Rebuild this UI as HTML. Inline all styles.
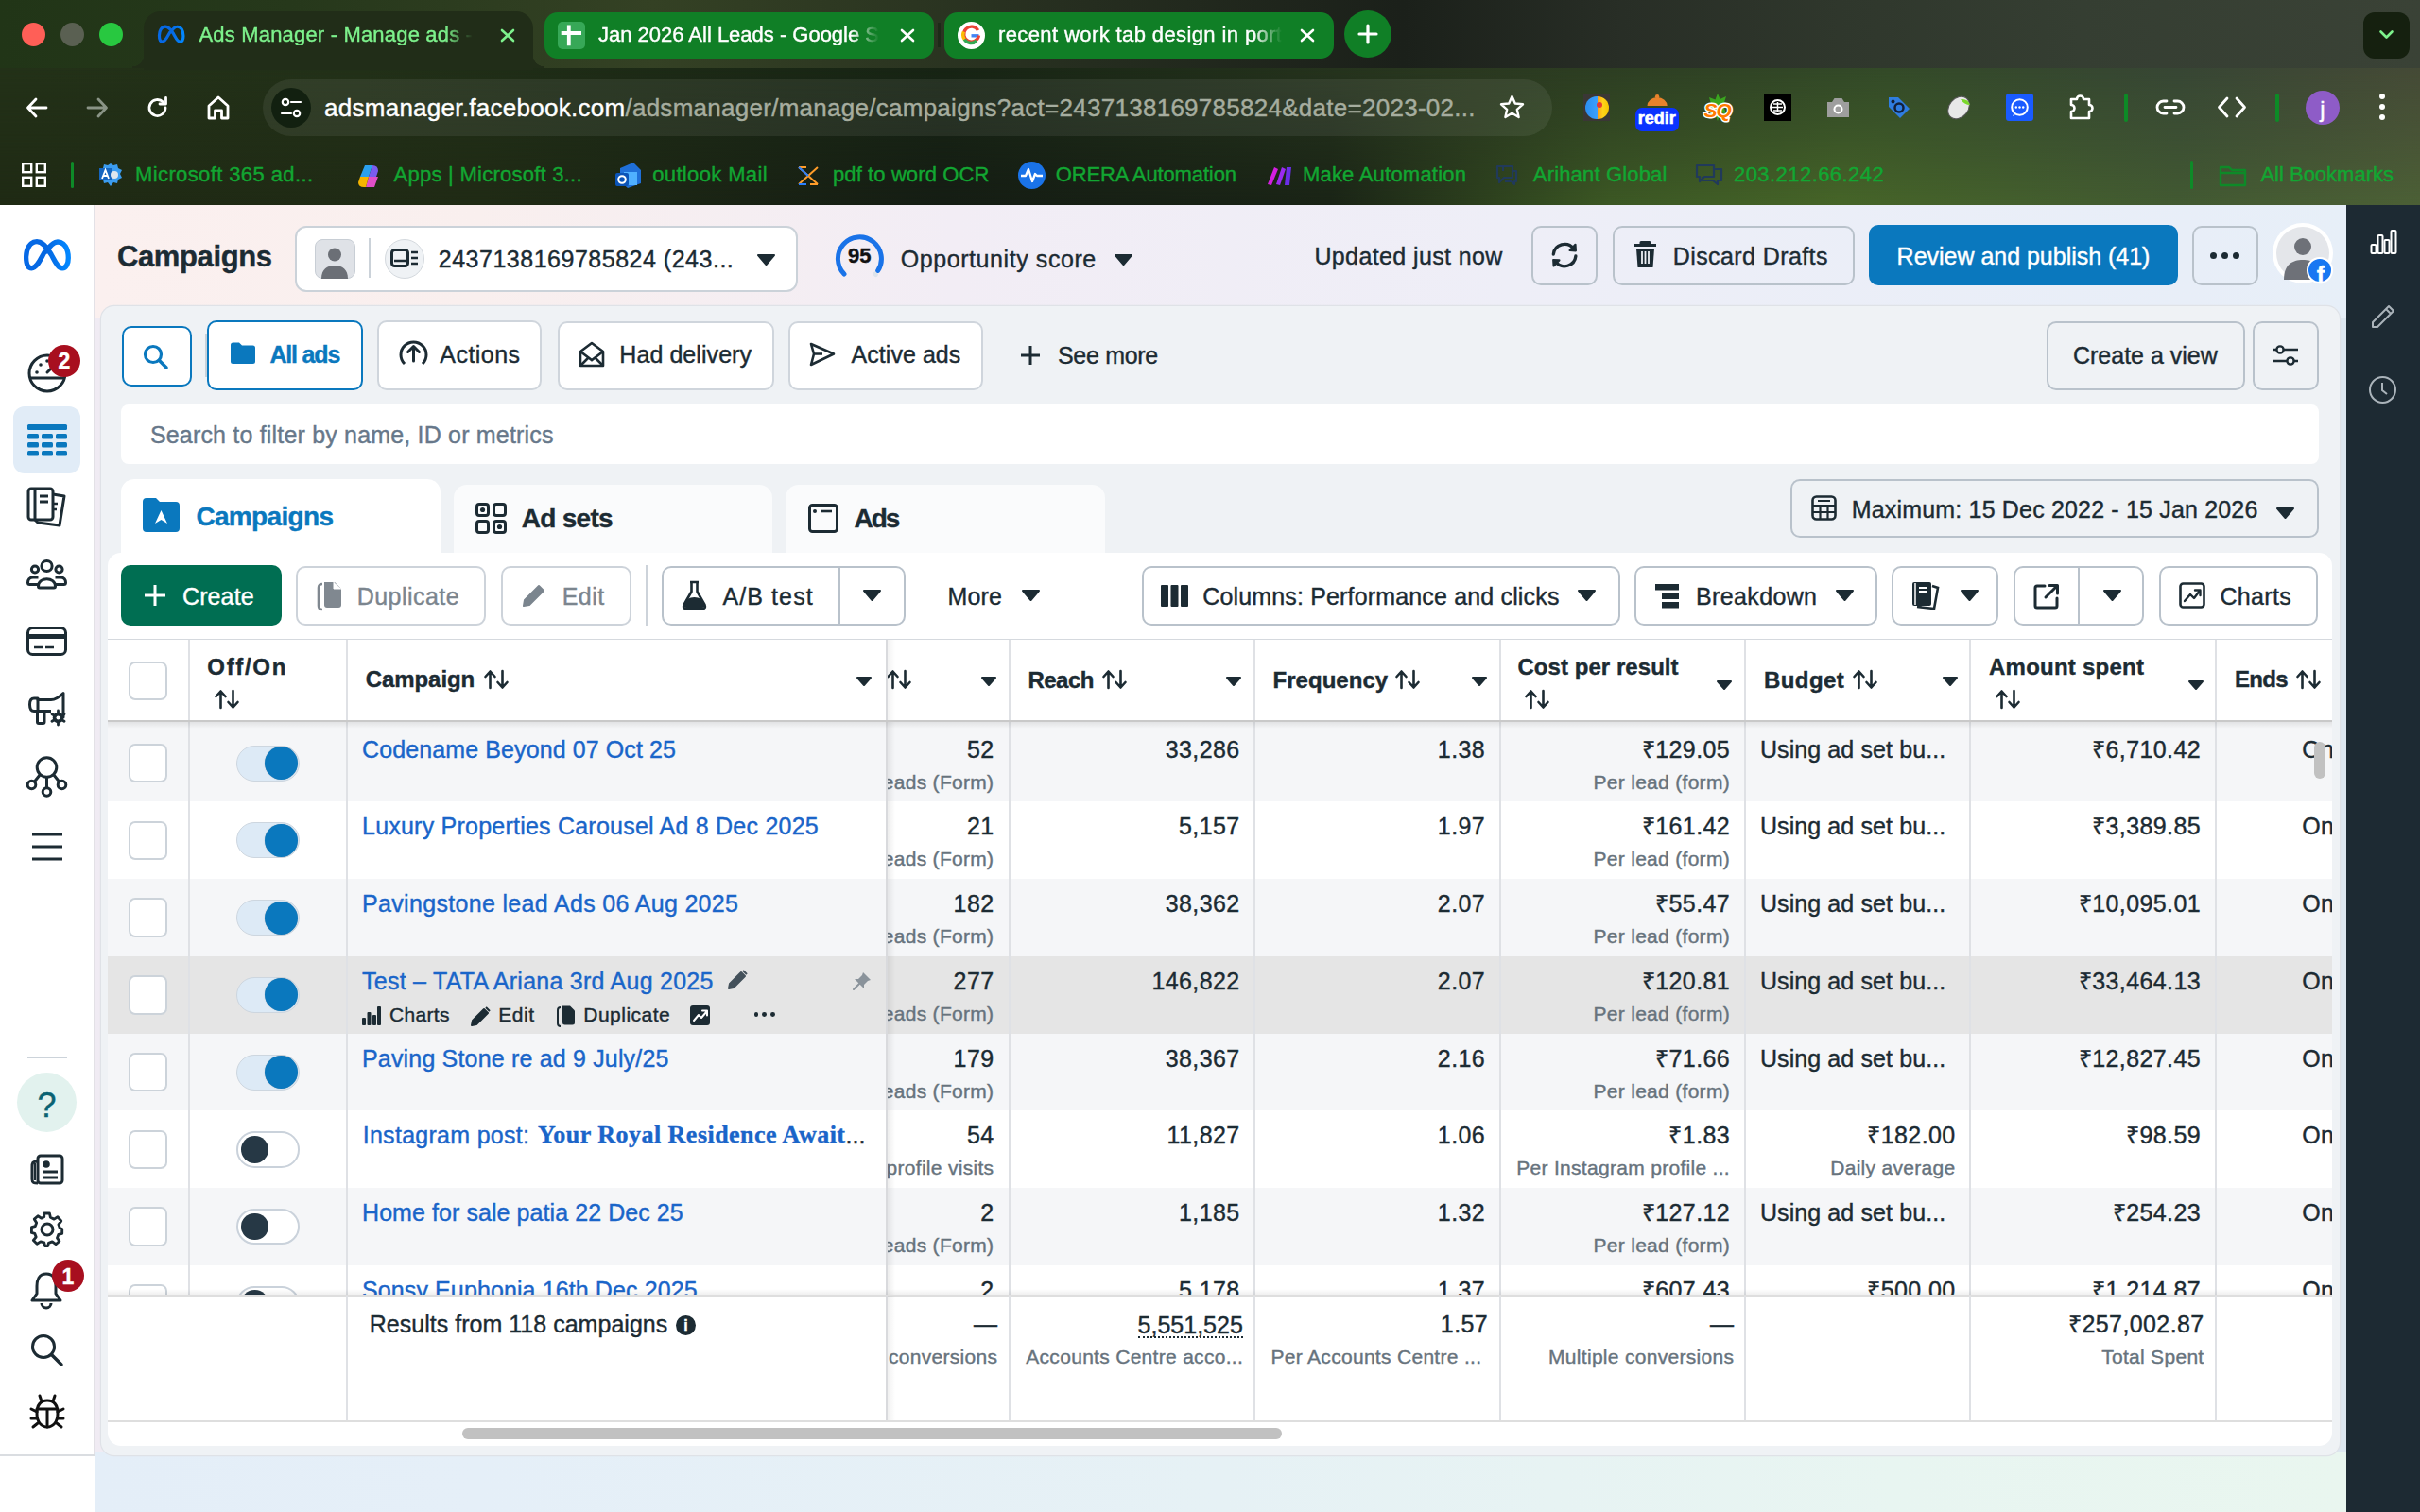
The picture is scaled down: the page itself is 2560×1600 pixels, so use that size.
<!DOCTYPE html>
<html><head><meta charset="utf-8"><title>Ads Manager</title>
<style>html,body{margin:0;padding:0;width:2560px;height:1600px;overflow:hidden;background:#fff;font-family:"Liberation Sans",sans-serif}div[id^=t],#url{-webkit-text-stroke-width:0.4px}</style>
</head><body>
<div style="position:absolute;left:0px;top:0px;width:2560px;height:72px;background:linear-gradient(90deg,#213517 0%,#26381b 12%,#344124 27%,#252d1f 45%,#1b201a 58%,#282e26 67%,#2f372c 76%,#353e32 86%,#3a4236 100%)"></div>
<div style="position:absolute;left:0px;top:72px;width:2560px;height:145px;background:linear-gradient(90deg,#1f2a14 0%,#202b15 20%,#151d14 39%,#1a2416 55%,#3c5824 66.5%,#466528 76%,#425a32 90%,#4c6036 100%)"></div>
<div style="position:absolute;left:0px;top:72px;width:2560px;height:145px;background:linear-gradient(90deg,#233118 0%,#223018 15%,#172414 39%,#2a3820 61%,#334a28 78%,#374634 90%,#454a36 100%);-webkit-mask-image:linear-gradient(180deg,#000 0%,rgba(0,0,0,0.55) 50%,transparent 100%)"></div>
<div style="position:absolute;left:23.0px;top:24px;width:25px;height:25px;border-radius:50%;background:#ff5f57"></div>
<div style="position:absolute;left:63.5px;top:24px;width:25px;height:25px;border-radius:50%;background:#5a6052"></div>
<div style="position:absolute;left:104.5px;top:24px;width:25px;height:25px;border-radius:50%;background:#28c840"></div>
<div style="position:absolute;left:152px;top:12px;width:412px;height:62px;background:#212d18;border-radius:18px 18px 0 0"></div>
<div style="position:absolute;left:140px;top:58px;width:12px;height:14px;background:radial-gradient(circle at 0 0, transparent 12px, #212d18 12.5px)"></div>
<div style="position:absolute;left:564px;top:58px;width:12px;height:14px;background:radial-gradient(circle at 12px 0, transparent 12px, #212d18 12.5px)"></div>
<svg style="position:absolute;left:163.067px;top:22.44px;overflow:visible" width="36.48" height="28.499999999999996" viewBox="0 0 64 50"><defs><linearGradient id="mg163" x1="0" y1="0" x2="1" y2="0"><stop offset="0" stop-color="#0669e6"/><stop offset="0.5" stop-color="#0668e1"/><stop offset="1" stop-color="#0287ff"/></linearGradient></defs><path d="M29 22 C25 29 21 38.8 15.5 38.8 C11 38.8 9.6 33 9.6 27 C9.6 18 14 10.7 21 10.7 C27 10.7 31 16 36 24 C40 31 43 38.8 48 38.8 C52 38.8 54.3 34 54.3 28 C54.3 18 50 11 43 11 C38 11 34.5 15.5 31 21" fill="none" stroke="url(#mg163)" stroke-width="5.6" stroke-linecap="round"/></svg>
<div id="t0" style="position:absolute;left:210.5px;top:25.50px;font-family:'Liberation Sans', sans-serif;font-size:22px;line-height:22px;font-weight:400;color:#7df28c;white-space:nowrap;letter-spacing:0.182px;-webkit-mask-image:linear-gradient(90deg,#000 90%,transparent 100%)">Ads Manager - Manage ads -</div>
<svg style="position:absolute;left:530px;top:31px;overflow:visible;" width="14" height="13" viewBox="0 0 14 13"><path d="M1 1 L13 12 M13 1 L1 12" stroke="#7df28c" stroke-width="2.6" stroke-linecap="round"/></svg>
<div style="position:absolute;left:576px;top:12.5px;width:412px;height:49.5px;background:#107f26;border-radius:14px"></div>
<div style="position:absolute;left:590.2px;top:22.9px;width:28.5px;height:28.8px;background:#37a857;border-radius:5px"></div>
<svg style="position:absolute;left:590.2px;top:22.9px;overflow:visible;" width="28.5" height="28.8" viewBox="0 0 28.5 28.8"><path d="M11.8 3.5 V25.3 M3.7 12 H25" stroke="#fff" stroke-width="3.8"/></svg>
<div id="t1" style="position:absolute;left:633px;top:25.50px;font-family:'Liberation Sans', sans-serif;font-size:22px;line-height:22px;font-weight:400;color:#ffffff;white-space:nowrap;letter-spacing:-0.008px;-webkit-mask-image:linear-gradient(90deg,#000 90%,transparent 100%)">Jan 2026 All Leads - Google S</div>
<svg style="position:absolute;left:953px;top:31px;overflow:visible;" width="14" height="13" viewBox="0 0 14 13"><path d="M1 1 L13 12 M13 1 L1 12" stroke="#fff" stroke-width="2.6" stroke-linecap="round"/></svg>
<div style="position:absolute;left:992px;top:24px;width:3px;height:26px;background:#1d2a18"></div>
<div style="position:absolute;left:999px;top:12.5px;width:412px;height:49.5px;background:#107f26;border-radius:14px"></div>
<div style="position:absolute;left:1013px;top:22.5px;width:29px;height:29px;background:#fff;border-radius:50%"></div>
<svg style="position:absolute;left:1015px;top:24.5px;overflow:visible;" width="25" height="25" viewBox="0 0 25 25"><path d="M20.5 12.8 H12.5" stroke="#4285f4" stroke-width="3.4"/><path d="M19.6 7.2 A8 8 0 1 0 20.5 12.5" fill="none" stroke="#ea4335" stroke-width="3.4"/><path d="M5.2 16.5 A8 8 0 0 0 18 18" fill="none" stroke="#34a853" stroke-width="3.4"/><path d="M4.5 8.5 A8 8 0 0 0 5.2 16.5" fill="none" stroke="#fbbc05" stroke-width="3.4"/></svg>
<div id="t2" style="position:absolute;left:1056px;top:25.50px;font-family:'Liberation Sans', sans-serif;font-size:22px;line-height:22px;font-weight:400;color:#ffffff;white-space:nowrap;letter-spacing:0.393px;-webkit-mask-image:linear-gradient(90deg,#000 90%,transparent 100%)">recent work tab design in port</div>
<svg style="position:absolute;left:1376px;top:31px;overflow:visible;" width="14" height="13" viewBox="0 0 14 13"><path d="M1 1 L13 12 M13 1 L1 12" stroke="#fff" stroke-width="2.6" stroke-linecap="round"/></svg>
<div style="position:absolute;left:1422px;top:11px;width:50px;height:50px;background:#107f26;border-radius:50%"></div>
<svg style="position:absolute;left:1436px;top:25px;overflow:visible;" width="22" height="22" viewBox="0 0 22 22"><path d="M11 2 V20 M2 11 H20" stroke="#fff" stroke-width="3.2" stroke-linecap="round"/></svg>
<div style="position:absolute;left:2500px;top:12.5px;width:49px;height:49px;background:#15200f;border-radius:12px"></div>
<svg style="position:absolute;left:2517px;top:32px;overflow:visible;" width="15" height="9" viewBox="0 0 15 9"><path d="M1.5 1.5 L7.5 7.5 L13.5 1.5" fill="none" stroke="#7df28c" stroke-width="2.6" stroke-linecap="round" stroke-linejoin="round"/></svg>
<svg style="position:absolute;left:27px;top:102px;overflow:visible;" width="24" height="24" viewBox="0 0 24 24"><path d="M22 12 H3 M11 3 L2.5 12 L11 21" fill="none" stroke="#fff" stroke-width="2.8" stroke-linecap="round" stroke-linejoin="round"/></svg>
<svg style="position:absolute;left:91px;top:102px;overflow:visible;" width="24" height="24" viewBox="0 0 24 24"><path d="M2 12 H21 M13 3 L21.5 12 L13 21" fill="none" stroke="#8a9486" stroke-width="2.8" stroke-linecap="round" stroke-linejoin="round"/></svg>
<svg style="position:absolute;left:155px;top:102px;overflow:visible;" width="24" height="24" viewBox="0 0 24 24"><path d="M20 12 A8.5 8.5 0 1 1 17.5 6" fill="none" stroke="#fff" stroke-width="2.8" stroke-linecap="round"/><path d="M20.5 1.5 V8 H14" fill="none" stroke="#fff" stroke-width="2.8" stroke-linecap="round" stroke-linejoin="round"/></svg>
<svg style="position:absolute;left:219px;top:101px;overflow:visible;" width="24" height="26" viewBox="0 0 24 26"><path d="M2 11 L12 2 L22 11 V24 H15.5 V16 H8.5 V24 H2 Z" fill="none" stroke="#fff" stroke-width="2.8" stroke-linejoin="round"/></svg>
<div style="position:absolute;left:278px;top:84px;width:1364px;height:60px;background:rgba(255,255,255,0.07);border-radius:30px"></div>
<div style="position:absolute;left:287px;top:93px;width:42px;height:42px;background:#122010;border-radius:50%"></div>
<svg style="position:absolute;left:296px;top:103px;overflow:visible;" width="24" height="22" viewBox="0 0 24 22"><circle cx="6" cy="5" r="3.2" fill="none" stroke="#fff" stroke-width="2.2"/><path d="M12 5 H22" stroke="#fff" stroke-width="2.2" stroke-linecap="round"/><circle cx="18" cy="17" r="3.2" fill="none" stroke="#fff" stroke-width="2.2"/><path d="M2 17 H12" stroke="#fff" stroke-width="2.2" stroke-linecap="round"/></svg>
<div id="url" style="position:absolute;left:343px;top:100.6px;font-family:'Liberation Sans';font-size:26px;line-height:26px;white-space:nowrap;color:#a6ad9f;letter-spacing:0.27px"><span style="color:#fff">adsmanager.facebook.com</span>/adsmanager/manage/campaigns?act=2437138169785824&amp;date=2023-02...</div>
<svg style="position:absolute;left:1586px;top:100px;overflow:visible;" width="27" height="27" viewBox="0 0 27 27"><path d="M13.5 2 L16.8 9.5 L25 10.3 L18.8 15.8 L20.6 24 L13.5 19.8 L6.4 24 L8.2 15.8 L2 10.3 L10.2 9.5 Z" fill="none" stroke="#fff" stroke-width="2.4" stroke-linejoin="round"/></svg>
<div style="position:absolute;left:1675px;top:99.7px;width:28px;height:28px;background:#3a3735"></div>
<div style="position:absolute;left:1677px;top:101.5px;width:24.5px;height:24.5px;border-radius:50%;background:linear-gradient(90deg,#2b8ef0 0%,#3aa0ff 50%,#ff9a1a 50%,#ffd21a 75%,#f5c400 100%)"></div>
<div style="position:absolute;left:1689px;top:108px;width:6px;height:6px;background:#e53935;border-radius:50%"></div>
<svg style="position:absolute;left:1741.8px;top:100px;overflow:visible;" width="22.2" height="12" viewBox="0 0 22.2 12"><circle cx="11.1" cy="2.3" r="2.2" fill="#e8822c"/><path d="M0.5 12 A10.6 9 0 0 1 21.7 12 Z" fill="#e8822c"/></svg>
<div style="position:absolute;left:1729.7px;top:113.5px;width:46.3px;height:25.2px;background:#0a33ff;border-radius:7px"></div>
<div id="t3" style="position:absolute;left:1752.8px;top:116.30px;font-family:'Liberation Sans', sans-serif;font-size:18px;line-height:18px;font-weight:700;color:#fff;white-space:nowrap;transform:translateX(-50%);-webkit-text-stroke-width:0.6px">redir</div>
<svg style="position:absolute;left:1805px;top:99px;overflow:visible;" width="24" height="29" viewBox="0 0 24 29"><path d="M12 0 L14.5 6 L21 3 L19 9.5 L24 12 L19 15 L21 22 L15 19.5 L12 29 L9 21 L3 24 L5 17 L0 14 L5 11 L3 4 L9.5 6.5 Z" fill="#3aa51f"/></svg>
<div id="t4" style="position:absolute;left:1802.5px;top:106.35px;font-family:'Liberation Sans', sans-serif;font-size:21px;line-height:21px;font-weight:700;color:#ff7a00;white-space:nowrap;font-style:italic;-webkit-text-stroke:3px #fff;paint-order:stroke fill;letter-spacing:-1px">SQ</div>
<div style="position:absolute;left:1866px;top:99px;width:29px;height:29px;background:#000"></div>
<svg style="position:absolute;left:1871px;top:104px;overflow:visible;" width="19" height="19" viewBox="0 0 19 19"><circle cx="9.5" cy="9.5" r="7.5" fill="none" stroke="#fff" stroke-width="2"/><path d="M4 9.5 H15 M9.5 4 V15 M5 6 H14 M5 13 H14" stroke="#fff" stroke-width="1.5"/></svg>
<svg style="position:absolute;left:1930px;top:101px;overflow:visible;" width="29" height="25" viewBox="0 0 29 25"><path d="M3 7 H8 L10.5 3 H18.5 L21 7 H26 V23 H3 Z" fill="#9e9e9e"/><circle cx="14.5" cy="14.5" r="5" fill="#fff"/><circle cx="14.5" cy="14.5" r="3" fill="#9e9e9e"/></svg>
<svg style="position:absolute;left:1995px;top:100px;overflow:visible;" width="28" height="28" viewBox="0 0 28 28"><path d="M3 3 H13 L25 15 L15 25 L3 13 Z" fill="#2f7de1"/><circle cx="14" cy="14" r="4.5" fill="none" stroke="#13203a" stroke-width="2.5"/><circle cx="7.5" cy="7.5" r="2" fill="#13203a"/></svg>
<svg style="position:absolute;left:2058px;top:99px;overflow:visible;" width="30" height="30" viewBox="0 0 30 30"><ellipse cx="14" cy="15" rx="10" ry="13" transform="rotate(40 14 15)" fill="#e8e8e8" stroke="#555" stroke-width="1"/><path d="M16 6 Q24 5 26 12 Q20 12 16 6 Z" fill="#7bd82b"/></svg>
<div style="position:absolute;left:2122px;top:99px;width:29px;height:29px;background:#1a5bff;border-radius:3px"></div>
<svg style="position:absolute;left:2126px;top:103px;overflow:visible;" width="21" height="21" viewBox="0 0 21 21"><circle cx="10.5" cy="10.5" r="8.3" fill="none" stroke="#fff" stroke-width="2"/><path d="M4 18 L3 20 L6 18.5" fill="#fff"/><circle cx="6.8" cy="10.5" r="1.2" fill="#fff"/><circle cx="10.5" cy="10.5" r="1.2" fill="#fff"/><circle cx="14.2" cy="10.5" r="1.2" fill="#fff"/></svg>
<svg style="position:absolute;left:2187px;top:99px;overflow:visible;" width="30" height="30" viewBox="0 0 30 30"><path d="M4 6 H10 A3.5 3.5 0 0 1 17 6 H23 V12 A3.5 3.5 0 0 1 23 19 V26 H4 V19 A3.5 3.5 0 0 0 4 12 Z" fill="none" stroke="#fff" stroke-width="2.6" stroke-linejoin="round"/></svg>
<div style="position:absolute;left:2247px;top:99px;width:4px;height:30px;background:#0d8a26;border-radius:2px"></div>
<svg style="position:absolute;left:2280px;top:104px;overflow:visible;" width="32" height="19" viewBox="0 0 32 19"><path d="M12 3 H8.5 A6.5 6.5 0 0 0 8.5 16 H12 M20 3 H23.5 A6.5 6.5 0 0 1 23.5 16 H20 M10 9.5 H22" fill="none" stroke="#fff" stroke-width="2.8" stroke-linecap="round"/></svg>
<svg style="position:absolute;left:2345px;top:101px;overflow:visible;" width="32" height="25" viewBox="0 0 32 25"><path d="M11 3 L2.5 12.5 L11 22 M21 3 L29.5 12.5 L21 22" fill="none" stroke="#fff" stroke-width="2.8" stroke-linecap="round" stroke-linejoin="round"/></svg>
<div style="position:absolute;left:2407px;top:99px;width:4px;height:30px;background:#0d8a26;border-radius:2px"></div>
<div style="position:absolute;left:2439px;top:96px;width:36px;height:36px;background:#8e5cc7;border-radius:50%"></div>
<div id="t5" style="position:absolute;left:2457px;top:103.60px;font-family:'Liberation Sans', sans-serif;font-size:24px;line-height:24px;font-weight:400;color:#fff;white-space:nowrap;transform:translateX(-50%)">j</div>
<div style="position:absolute;left:2517px;top:99px;width:6px;height:6px;background:#fff;border-radius:50%"></div>
<div style="position:absolute;left:2517px;top:110px;width:6px;height:6px;background:#fff;border-radius:50%"></div>
<div style="position:absolute;left:2517px;top:121px;width:6px;height:6px;background:#fff;border-radius:50%"></div>
<svg style="position:absolute;left:23px;top:172px;overflow:visible;" width="26" height="26" viewBox="0 0 26 26"><rect x="1.2" y="1.2" width="9" height="9" fill="none" stroke="#fff" stroke-width="2.4"/><rect x="1.2" y="15.8" width="9" height="9" fill="none" stroke="#fff" stroke-width="2.4"/><rect x="15.8" y="1.2" width="9" height="9" fill="none" stroke="#fff" stroke-width="2.4"/><rect x="15.8" y="15.8" width="9" height="9" fill="none" stroke="#fff" stroke-width="2.4"/></svg>
<div style="position:absolute;left:74.5px;top:171px;width:3.5px;height:28px;background:#0e8a28;border-radius:2px"></div>
<svg style="position:absolute;left:103px;top:171px;overflow:visible;" width="29" height="28" viewBox="0 0 29 28"><path d="M14 2 L17 4 L21 3 L22 7 L26 9 L24 13 L26 17 L22 19 L21 23 L17 22 L14 26 L11 22 L7 23 L6 19 L2 17 L4 13 L2 9 L6 7 L7 3 L11 4 Z" fill="#3b9cf0"/><rect x="2" y="7" width="13" height="13" fill="#1565c0"/><path d="M5 18 L8.5 9 L12 18 M6.2 15 H10.8" stroke="#fff" stroke-width="1.8" fill="none"/><circle cx="18" cy="14" r="4" fill="#dfe6ee"/></svg>
<div id="t6" style="position:absolute;left:143px;top:173.50px;font-family:'Liberation Sans', sans-serif;font-size:22px;line-height:22px;font-weight:400;color:#12a632;white-space:nowrap;letter-spacing:0.390px;">Microsoft 365 ad...</div>
<svg style="position:absolute;left:378px;top:173px;overflow:visible;" width="27" height="26" viewBox="0 0 27 26"><path d="M8 2 H16 L12 14 H3 Z" fill="#2aa0f0"/><path d="M12 14 H22 L18 25 H9 Z" fill="#e04ec8"/><path d="M16 2 Q22 2 22 8 L20 14 H12 Z" fill="#7b5cf0"/><path d="M3 14 L1 20 Q1 25 7 25 H9 L12 14 Z" fill="#f5b400"/></svg>
<div id="t7" style="position:absolute;left:416.6px;top:173.50px;font-family:'Liberation Sans', sans-serif;font-size:22px;line-height:22px;font-weight:400;color:#12a632;white-space:nowrap;letter-spacing:0.249px;">Apps | Microsoft 3...</div>
<svg style="position:absolute;left:650px;top:170px;overflow:visible;" width="29" height="30" viewBox="0 0 29 30"><path d="M6 8 L20 2 L28 10 V24 L14 29 L6 22 Z" fill="#1f6fd8"/><path d="M10 12 H24 V26 H10 Z" fill="#4fb0ff"/><rect x="1" y="13" width="14" height="14" rx="2" fill="#0b54b8"/><circle cx="8" cy="20" r="3.8" fill="none" stroke="#fff" stroke-width="2"/></svg>
<div id="t8" style="position:absolute;left:690.2px;top:173.50px;font-family:'Liberation Sans', sans-serif;font-size:22px;line-height:22px;font-weight:400;color:#12a632;white-space:nowrap;letter-spacing:0.364px;">outlook Mail</div>
<svg style="position:absolute;left:843px;top:174px;overflow:visible;" width="24" height="24" viewBox="0 0 24 24"><path d="M2 3 L12 12 L2 21 M22 3 L12 12 L22 21 M2 3 H10 M14 21 H22" fill="none" stroke="#ff9d2a" stroke-width="2"/><path d="M2 3 L12 12 M2 21 H10" fill="none" stroke="#2b7fff" stroke-width="2"/></svg>
<div id="t9" style="position:absolute;left:881px;top:173.50px;font-family:'Liberation Sans', sans-serif;font-size:22px;line-height:22px;font-weight:400;color:#12a632;white-space:nowrap;letter-spacing:0.104px;">pdf to word OCR</div>
<div style="position:absolute;left:1077px;top:171px;width:29px;height:29px;background:#1a73e8;border-radius:50%"></div>
<svg style="position:absolute;left:1079px;top:176px;overflow:visible;" width="25" height="19" viewBox="0 0 25 19"><path d="M1 10 H6 L9 3 L13 16 L16 8 L18 10 H24" fill="none" stroke="#fff" stroke-width="2.3" stroke-linejoin="round"/></svg>
<div id="t10" style="position:absolute;left:1116.7px;top:173.50px;font-family:'Liberation Sans', sans-serif;font-size:22px;line-height:22px;font-weight:400;color:#12a632;white-space:nowrap;letter-spacing:-0.128px;">ORERA Automation</div>
<svg style="position:absolute;left:1340px;top:175px;overflow:visible;" width="27" height="22" viewBox="0 0 27 22"><path d="M1 20 L8 2 L12 4 L5 21 Z" fill="#d41ee0"/><path d="M10 20 L16 2 L20 4 L14 21 Z" fill="#9b2af0"/><path d="M19 21 L21 2 L26 2 L24 21 Z" fill="#6a2ee8"/></svg>
<div id="t11" style="position:absolute;left:1377.9px;top:173.50px;font-family:'Liberation Sans', sans-serif;font-size:22px;line-height:22px;font-weight:400;color:#12a632;white-space:nowrap;letter-spacing:0.223px;">Make Automation</div>
<svg style="position:absolute;left:1581px;top:173px;overflow:visible;" width="26" height="24" viewBox="0 0 26 24"><path d="M3 3 H19 V15 H10 L5 20 V15 H3 Z M9 8 V3 M19 8 H23 V19 H21 V22 L18 19 H11" fill="none" stroke="#213a5a" stroke-width="2.2" stroke-linejoin="round"/></svg>
<div id="t12" style="position:absolute;left:1621.8px;top:173.50px;font-family:'Liberation Sans', sans-serif;font-size:22px;line-height:22px;font-weight:400;color:#12a632;white-space:nowrap;letter-spacing:0.168px;">Arihant Global</div>
<svg style="position:absolute;left:1793px;top:173px;overflow:visible;" width="30" height="24" viewBox="0 0 30 24"><path d="M2 2 H20 V14 H10 L5 19 V14 H2 Z M8 14 V18 H19 L24 22 V18 H28 V6 H20" fill="none" stroke="#213a5a" stroke-width="2.2" stroke-linejoin="round"/></svg>
<div id="t13" style="position:absolute;left:1834px;top:173.50px;font-family:'Liberation Sans', sans-serif;font-size:22px;line-height:22px;font-weight:400;color:#12a632;white-space:nowrap;letter-spacing:0.443px;">203.212.66.242</div>
<div style="position:absolute;left:2316.5px;top:170px;width:3.5px;height:30px;background:#0e8a28;border-radius:2px"></div>
<svg style="position:absolute;left:2347px;top:174px;overflow:visible;" width="30" height="24" viewBox="0 0 30 24"><path d="M2 3 H11 L14 6 H28 V22 H2 Z M2 9 H28" fill="none" stroke="#0e8a28" stroke-width="2.4" stroke-linejoin="round"/></svg>
<div id="t14" style="position:absolute;left:2391.4px;top:173.50px;font-family:'Liberation Sans', sans-serif;font-size:22px;line-height:22px;font-weight:400;color:#12a632;white-space:nowrap;letter-spacing:0.001px;">All Bookmarks</div>
<div style="position:absolute;left:100px;top:217px;width:2382px;height:1383px;background:linear-gradient(90deg,#f0ebf3 0%,#eceef6 50%,#dde7f0 100%)"></div>
<div style="position:absolute;left:100px;top:217px;width:2382px;height:120px;background:linear-gradient(90deg,#fbf0ef 0%,#f9efee 17%,#f2edf5 38%,#eeeef7 63%,#e8eef8 93%,#e7eff8 100%)"></div>
<div style="position:absolute;left:100px;top:1536px;width:2382px;height:64px;background:linear-gradient(90deg,#e4eef8 0%,#e5eff8 17%,#e6f1f5 50%,#e8f5f1 80%,#e9f6ef 100%)"></div>
<div style="position:absolute;left:0px;top:217px;width:100px;height:1323px;background:#fff;border-right:1.5px solid #e3e1e6;box-sizing:border-box"></div>
<div style="position:absolute;left:0px;top:1539px;width:100px;height:1.5px;background:#dadde1"></div>
<div style="position:absolute;left:0px;top:1540.5px;width:100px;height:60px;background:#fff"></div>
<svg style="position:absolute;left:18px;top:245px;overflow:visible" width="64.0" height="50.0" viewBox="0 0 64 50"><defs><linearGradient id="mg18" x1="0" y1="0" x2="1" y2="0"><stop offset="0" stop-color="#0669e6"/><stop offset="0.5" stop-color="#0668e1"/><stop offset="1" stop-color="#0287ff"/></linearGradient></defs><path d="M29 22 C25 29 21 38.8 15.5 38.8 C11 38.8 9.6 33 9.6 27 C9.6 18 14 10.7 21 10.7 C27 10.7 31 16 36 24 C40 31 43 38.8 48 38.8 C52 38.8 54.3 34 54.3 28 C54.3 18 50 11 43 11 C38 11 34.5 15.5 31 21" fill="none" stroke="url(#mg18)" stroke-width="5.3" stroke-linecap="round"/></svg>
<svg style="position:absolute;left:29px;top:374px;overflow:visible;" width="42" height="42" viewBox="0 0 42 42"><circle cx="21" cy="21" r="19" fill="none" stroke="#1c2b33" stroke-width="3"/><path d="M3 26 H39" stroke="#1c2b33" stroke-width="3"/><circle cx="10" cy="20" r="1.8" fill="#1c2b33"/><circle cx="14" cy="12" r="1.8" fill="#1c2b33"/><circle cx="21" cy="8" r="1.8" fill="#1c2b33"/><path d="M21 20 L29 12" stroke="#1c2b33" stroke-width="3" stroke-linecap="round"/></svg>
<div style="position:absolute;left:51px;top:365px;width:34px;height:34px;background:#a80f1f;border-radius:50%"></div>
<div id="t15" style="position:absolute;left:68px;top:371.45px;font-family:'Liberation Sans', sans-serif;font-size:23px;line-height:23px;font-weight:700;color:#fff;white-space:nowrap;transform:translateX(-50%)">2</div>
<div style="position:absolute;left:14px;top:430px;width:71px;height:71px;background:#e1ecf7;border-radius:12px"></div>
<svg style="position:absolute;left:29px;top:449px;overflow:visible;" width="42" height="34" viewBox="0 0 42 34"><rect x="0" y="0" width="42" height="6" rx="1.5" fill="#0a78be"/><rect x="0" y="10" width="12" height="5.5" rx="1.5" fill="#0a78be"/><rect x="15" y="10" width="12" height="5.5" rx="1.5" fill="#0a78be"/><rect x="30" y="10" width="12" height="5.5" rx="1.5" fill="#0a78be"/><rect x="0" y="19" width="12" height="5.5" rx="1.5" fill="#0a78be"/><rect x="15" y="19" width="12" height="5.5" rx="1.5" fill="#0a78be"/><rect x="30" y="19" width="12" height="5.5" rx="1.5" fill="#0a78be"/><rect x="0" y="28" width="12" height="5.5" rx="1.5" fill="#0a78be"/><rect x="15" y="28" width="12" height="5.5" rx="1.5" fill="#0a78be"/><rect x="30" y="28" width="12" height="5.5" rx="1.5" fill="#0a78be"/></svg>
<svg style="position:absolute;left:28px;top:515px;overflow:visible;" width="43" height="43" viewBox="0 0 43 43"><rect x="2" y="2" width="26" height="33" rx="3" fill="none" stroke="#1c2b33" stroke-width="3"/><path d="M9 2 V35 M14 10 H23 M14 16 H23" stroke="#1c2b33" stroke-width="3"/><path d="M28 8 L40 10 L35 41 L12 38 L9 35" fill="none" stroke="#1c2b33" stroke-width="3" stroke-linejoin="round"/><path d="M29 18 H33 M29 24 H32" stroke="#1c2b33" stroke-width="2.5"/></svg>
<svg style="position:absolute;left:26px;top:590px;overflow:visible;" width="48" height="36" viewBox="0 0 48 36"><circle cx="23.5" cy="9" r="5.6" fill="none" stroke="#1c2b33" stroke-width="3"/><circle cx="11" cy="12.5" r="3.6" fill="none" stroke="#1c2b33" stroke-width="3"/><circle cx="36.5" cy="12.5" r="3.6" fill="none" stroke="#1c2b33" stroke-width="3"/><path d="M14.5 30.5 C14.5 20 32.5 20 32.5 30.5 Q32.5 32 31 32 H16 Q14.5 32 14.5 30.5 Z" fill="none" stroke="#1c2b33" stroke-width="3" stroke-linejoin="round"/><path d="M14.5 21 H9 C5 21 3.5 24 3.5 26.5 Q3.5 28.5 5.5 28.5 H14 M32.5 21 H38 C42 21 43.5 24 43.5 26.5 Q43.5 28.5 41.5 28.5 H33" fill="none" stroke="#1c2b33" stroke-width="3" stroke-linejoin="round"/></svg>
<svg style="position:absolute;left:28px;top:663px;overflow:visible;" width="43" height="31" viewBox="0 0 43 31"><rect x="1.5" y="1.5" width="40" height="28" rx="5" fill="none" stroke="#1c2b33" stroke-width="3"/><rect x="1.5" y="8" width="40" height="5" fill="#1c2b33"/><path d="M8 22 H17 M20 22 H29" stroke="#1c2b33" stroke-width="2.5"/></svg>
<svg style="position:absolute;left:26px;top:728px;overflow:visible;" width="48" height="42" viewBox="0 0 48 42"><path d="M14 12.5 H28 Q34 12.5 41 5.5 V31" fill="none" stroke="#1c2b33" stroke-width="3" stroke-linecap="round" stroke-linejoin="round"/><path d="M14 11 H10 Q5.5 11 5.5 17.5 Q5.5 24.5 10 24.5 H14 Z M14 11 V24.5 H28" fill="none" stroke="#1c2b33" stroke-width="3" stroke-linejoin="round"/><path d="M13.5 24.5 V36 Q13.5 37.5 15 37.5 H19.5 Q21 37.5 21 36 V24.5" fill="none" stroke="#1c2b33" stroke-width="3" stroke-linejoin="round"/><g transform="translate(35.5 31.5)"><circle r="4.2" fill="none" stroke="#1c2b33" stroke-width="3.2"/><path d="M0 -7.5 V7.5 M-6.5 -3.75 L6.5 3.75 M-6.5 3.75 L6.5 -3.75" stroke="#1c2b33" stroke-width="2.8" stroke-linecap="round"/><circle r="2" fill="#fff"/></g></svg>
<svg style="position:absolute;left:26px;top:797px;overflow:visible;" width="48" height="48" viewBox="0 0 48 48"><circle cx="23.5" cy="15" r="10.3" fill="none" stroke="#1c2b33" stroke-width="3"/><circle cx="7.5" cy="33.5" r="4.3" fill="none" stroke="#1c2b33" stroke-width="3"/><circle cx="23.5" cy="41" r="4.3" fill="none" stroke="#1c2b33" stroke-width="3"/><circle cx="39.5" cy="33.5" r="4.3" fill="none" stroke="#1c2b33" stroke-width="3"/><path d="M23.5 25.3 V36.7 M16.5 22.5 L10.5 30 M30.5 22.5 L36.5 30" stroke="#1c2b33" stroke-width="3"/></svg>
<svg style="position:absolute;left:33px;top:881px;overflow:visible;" width="34" height="30" viewBox="0 0 34 30"><path d="M1 2 H33 M1 15 H33 M1 28 H33" stroke="#1c2b33" stroke-width="3"/></svg>
<div style="position:absolute;left:29px;top:1117.5px;width:42px;height:2px;background:#ccd3da"></div>
<div style="position:absolute;left:18px;top:1134.5px;width:63px;height:63px;background:#e2f2ee;border-radius:50%"></div>
<div id="t16" style="position:absolute;left:49.5px;top:1152.40px;font-family:'Liberation Sans', sans-serif;font-size:36px;line-height:36px;font-weight:400;color:#0b6373;white-space:nowrap;transform:translateX(-50%)">?</div>
<svg style="position:absolute;left:32px;top:1221px;overflow:visible;" width="36" height="33" viewBox="0 0 36 33"><rect x="8" y="2" width="26" height="29" rx="3" fill="none" stroke="#1c2b33" stroke-width="3"/><path d="M8 8 C2 8 2 10 2 14 V27 C2 31 4 31 8 31" fill="none" stroke="#1c2b33" stroke-width="3"/><path d="M5 10 V28" stroke="#1c2b33" stroke-width="2"/><circle cx="17" cy="11" r="3.8" fill="#1c2b33"/><path d="M13 19 H29 M13 25 H29" stroke="#1c2b33" stroke-width="3"/></svg>
<svg style="position:absolute;left:32px;top:1283px;overflow:visible;" width="36" height="36" viewBox="0 0 36 36"><path d="M15 1.5 H21 L22 6 L26 8 L30 5.5 L34 10 L31 14 L32.5 18 L35 19 V24 L31 25 L29.5 29 L32 32.5 L28 36 L24 33 L20 34.5 L19 38 H16 L15 34 L11 33 L7 35.5 L3 31.5 L6 28 L4.5 24 L1 23 V17 L5 16 L6.5 12 L4 8 L8 4.5 L12 7 L15 5.5 Z" transform="scale(0.95) translate(0.5 -0.5)" fill="none" stroke="#1c2b33" stroke-width="3" stroke-linejoin="round"/><circle cx="18" cy="18" r="6" fill="none" stroke="#1c2b33" stroke-width="3"/></svg>
<svg style="position:absolute;left:32px;top:1345px;overflow:visible;" width="34" height="38" viewBox="0 0 34 38"><path d="M17 3 C9 3 7 10 7 16 V24 L2 31 H32 L27 24 V16 C27 10 25 3 17 3 Z" fill="none" stroke="#1c2b33" stroke-width="3" stroke-linejoin="round"/><path d="M12 34 A5 5 0 0 0 22 34" fill="none" stroke="#1c2b33" stroke-width="3"/></svg>
<div style="position:absolute;left:55px;top:1333px;width:34px;height:34px;background:#a80f1f;border-radius:50%"></div>
<div id="t17" style="position:absolute;left:72px;top:1340.45px;font-family:'Liberation Sans', sans-serif;font-size:23px;line-height:23px;font-weight:700;color:#fff;white-space:nowrap;transform:translateX(-50%)">1</div>
<svg style="position:absolute;left:32px;top:1411px;overflow:visible;" width="36" height="36" viewBox="0 0 36 36"><circle cx="14" cy="14" r="11.5" fill="none" stroke="#1c2b33" stroke-width="3"/><path d="M22.5 22.5 L33 33" stroke="#1c2b33" stroke-width="3.5" stroke-linecap="round"/></svg>
<svg style="position:absolute;left:31px;top:1474px;overflow:visible;" width="38" height="38" viewBox="0 0 38 38"><path d="M19 8 C10 8 8 15 8 22 C8 31 13 36 19 36 C25 36 30 31 30 22 C30 15 28 8 19 8 Z" fill="none" stroke="#111" stroke-width="3"/><path d="M8 17 H30 M19 17 V36 M13 9 L11 3 M25 9 L27 3 M8 20 L2 17 M30 20 L36 17 M8 27 L2 27 M30 27 L36 27 M9 32 L4 36 M29 32 L34 36" stroke="#111" stroke-width="3" stroke-linecap="round"/></svg>
<div style="position:absolute;left:2482px;top:217px;width:78px;height:1383px;background:#1d2a33"></div>
<svg style="position:absolute;left:2507px;top:243px;overflow:visible;" width="28" height="26" viewBox="0 0 28 26"><rect x="1.5" y="16" width="5" height="9" rx="1" fill="none" stroke="#fff" stroke-width="2"/><rect x="8.5" y="6" width="5" height="19" rx="1" fill="none" stroke="#fff" stroke-width="2"/><rect x="15.5" y="11" width="5" height="14" rx="1" fill="none" stroke="#fff" stroke-width="2"/><rect x="22.5" y="1" width="5" height="24" rx="1" fill="none" stroke="#fff" stroke-width="2"/></svg>
<svg style="position:absolute;left:2508px;top:321px;overflow:visible;" width="27" height="27" viewBox="0 0 27 27"><path d="M2 20 L19 3 L24 8 L7 25 H2 Z M16 6 L21 11" fill="none" stroke="#aab3ba" stroke-width="2" stroke-linejoin="round"/></svg>
<svg style="position:absolute;left:2506px;top:398px;overflow:visible;" width="29" height="29" viewBox="0 0 29 29"><circle cx="14.5" cy="14.5" r="13.5" fill="none" stroke="#aab3ba" stroke-width="2"/><path d="M14 7 V15 L19 19" fill="none" stroke="#aab3ba" stroke-width="2"/></svg>
<div id="t18" style="position:absolute;left:124px;top:255.85px;font-family:'Liberation Sans', sans-serif;font-size:31px;line-height:31px;font-weight:700;color:#1c2b33;white-space:nowrap;letter-spacing:-0.389px;">Campaigns</div>
<div style="position:absolute;left:312px;top:238.5px;width:532px;height:70px;background:#fff;border:2px solid #cbd2d9;border-radius:12px;box-sizing:border-box"></div>
<div style="position:absolute;left:333px;top:252.5px;width:42.5px;height:42px;background:#dfe2e7;border:1.5px solid #c8ced5;border-radius:8px;box-sizing:border-box;overflow:hidden"></div>
<svg style="position:absolute;left:336px;top:260px;overflow:visible;" width="36" height="35" viewBox="0 0 36 35"><circle cx="18" cy="9.5" r="7" fill="#6b6f76"/><path d="M4 35 C4 25 10 21 18 21 C26 21 32 25 32 35 Z" fill="#6b6f76"/></svg>
<div style="position:absolute;left:390px;top:252px;width:2px;height:42px;background:#cbd2d9"></div>
<div style="position:absolute;left:406.5px;top:252.5px;width:42px;height:42px;background:#eff2f5;border:1.5px solid #d4d9de;border-radius:50%;box-sizing:border-box"></div>
<svg style="position:absolute;left:413px;top:263px;overflow:visible;" width="30" height="20" viewBox="0 0 30 20"><rect x="1.5" y="1.5" width="17" height="17" rx="3" fill="none" stroke="#1c2b33" stroke-width="3"/><path d="M4 13 H16" stroke="#1c2b33" stroke-width="2.5"/><path d="M22 4 H29 M22 10 H29 M22 16 H29" stroke="#1c2b33" stroke-width="2.6"/></svg>
<div id="t19" style="position:absolute;left:463.8px;top:261.75px;font-family:'Liberation Sans', sans-serif;font-size:25px;line-height:25px;font-weight:400;color:#1c2b33;white-space:nowrap;letter-spacing:0.510px;">2437138169785824 (243...</div>
<svg style="position:absolute;left:801.5px;top:270.0px;overflow:visible;" width="17" height="10" viewBox="0 0 17 10"><path d="M0 0 L17 0 L8.5 10 Z" fill="#1c2b33" stroke="#1c2b33" stroke-width="2" stroke-linejoin="round"/></svg>
<svg style="position:absolute;left:880px;top:245px;overflow:visible;" width="58" height="58" viewBox="0 0 58 58"><path d="M46 45 L46.5 45.5" stroke="#dde3eb" stroke-width="5" stroke-linecap="round"/><path d="M13 45 A23 23 0 1 1 48.7 41.4" fill="none" stroke="#1a73e8" stroke-width="5" stroke-linecap="round"/></svg>
<div id="t20" style="position:absolute;left:909.3px;top:260.30px;font-family:'Liberation Sans', sans-serif;font-size:22px;line-height:22px;font-weight:700;color:#111;white-space:nowrap;transform:translateX(-50%)">95</div>
<div id="t21" style="position:absolute;left:952.7px;top:261.75px;font-family:'Liberation Sans', sans-serif;font-size:25px;line-height:25px;font-weight:400;color:#1c2b33;white-space:nowrap;letter-spacing:0.579px;">Opportunity score</div>
<svg style="position:absolute;left:1179.5px;top:270.0px;overflow:visible;" width="17" height="10" viewBox="0 0 17 10"><path d="M0 0 L17 0 L8.5 10 Z" fill="#1c2b33" stroke="#1c2b33" stroke-width="2" stroke-linejoin="round"/></svg>
<div id="t22" style="position:absolute;left:1390.4px;top:258.75px;font-family:'Liberation Sans', sans-serif;font-size:25px;line-height:25px;font-weight:400;color:#1c2b33;white-space:nowrap;letter-spacing:0.388px;">Updated just now</div>
<div style="position:absolute;left:1620px;top:238.5px;width:70px;height:63px;background:transparent;border:2px solid #b9c2cb;border-radius:10px;box-sizing:border-box"></div>
<svg style="position:absolute;left:1640px;top:255px;overflow:visible;" width="30" height="30" viewBox="0 0 30 30"><path d="M3.3 14.2 A11.9 11.9 0 0 1 24.6 8.2" fill="none" stroke="#1c2b33" stroke-width="3.3" stroke-linecap="round"/><path d="M26.9 16 A11.9 11.9 0 0 1 5.6 22" fill="none" stroke="#1c2b33" stroke-width="3.3" stroke-linecap="round"/><path d="M26.5 3.8 L26.9 10.4 L20.6 10 Z M3.2 20 L9.4 20.4 L3.6 26.4 Z" fill="#1c2b33" stroke="#1c2b33" stroke-width="2.2" stroke-linejoin="round"/></svg>
<div style="position:absolute;left:1705.5px;top:238.5px;width:256.5px;height:63px;background:transparent;border:2px solid #b9c2cb;border-radius:10px;box-sizing:border-box"></div>
<svg style="position:absolute;left:1728px;top:254px;overflow:visible;" width="25" height="30" viewBox="0 0 25 30"><path d="M1 5.5 H24 M8 5 V2.5 H17 V5" fill="none" stroke="#1c2b33" stroke-width="3" stroke-linejoin="round"/><path d="M3 9 H22 L20.5 29 H4.5 Z" fill="#1c2b33"/><path d="M9 12 V25 M12.5 12 V25 M16 12 V25" stroke="#eef0f6" stroke-width="1.8"/></svg>
<div id="t23" style="position:absolute;left:1769.8px;top:258.75px;font-family:'Liberation Sans', sans-serif;font-size:25px;line-height:25px;font-weight:400;color:#1c2b33;white-space:nowrap;letter-spacing:0.402px;">Discard Drafts</div>
<div style="position:absolute;left:1977px;top:238px;width:327px;height:63.5px;background:#0a78be;border-radius:10px"></div>
<div id="t24" style="position:absolute;left:2006.6px;top:258.75px;font-family:'Liberation Sans', sans-serif;font-size:25px;line-height:25px;font-weight:400;color:#fff;white-space:nowrap;letter-spacing:-0.018px;">Review and publish (41)</div>
<div style="position:absolute;left:2318.5px;top:238.5px;width:70.5px;height:63px;background:transparent;border:2px solid #b9c2cb;border-radius:10px;box-sizing:border-box"></div>
<div style="position:absolute;left:2338.0px;top:266.5px;width:7px;height:7px;background:#1c2b33;border-radius:50%"></div>
<div style="position:absolute;left:2350.0px;top:266.5px;width:7px;height:7px;background:#1c2b33;border-radius:50%"></div>
<div style="position:absolute;left:2362.0px;top:266.5px;width:7px;height:7px;background:#1c2b33;border-radius:50%"></div>
<div style="position:absolute;left:2404px;top:236px;width:64px;height:64px;background:#fff;border-radius:50%"></div>
<div style="position:absolute;left:2408px;top:240px;width:56px;height:56px;background:#e4e6ea;border-radius:50%;overflow:hidden"></div>
<svg style="position:absolute;left:2408px;top:240px;overflow:visible;" width="56" height="56" viewBox="0 0 56 56"><circle cx="28" cy="21" r="9" fill="#6e7178"/><path d="M8 56 C8 40 17 35 28 35 C39 35 48 40 48 56 Z" fill="#6e7178"/></svg>
<div style="position:absolute;left:2440px;top:272px;width:28px;height:28px;background:#fff;border-radius:50%"></div>
<div style="position:absolute;left:2442px;top:274px;width:24px;height:24px;background:#1877f2;border-radius:50%;overflow:hidden"></div>
<div id="t25" style="position:absolute;left:2454.5px;top:278.75px;font-family:'Liberation Sans', sans-serif;font-size:25px;line-height:25px;font-weight:700;color:#fff;white-space:nowrap;transform:translateX(-45%)">f</div>
<div style="position:absolute;left:106.5px;top:323.5px;width:2368.5px;height:1216.5px;background:#eff2f5;border-radius:14px;box-shadow:0 0 0 1.2px #dfe2e7"></div>
<div style="position:absolute;left:128.5px;top:344.5px;width:74px;height:64px;background:#fff;border:2px solid #0a78be;border-radius:10px;box-sizing:border-box"></div>
<svg style="position:absolute;left:151px;top:364px;overflow:visible;" width="28" height="28" viewBox="0 0 28 28"><circle cx="11" cy="11" r="8.5" fill="none" stroke="#0a78be" stroke-width="3.2"/><path d="M17.5 17.5 L25 25" stroke="#0a78be" stroke-width="3.6" stroke-linecap="round"/></svg>
<div style="position:absolute;left:216.5px;top:353px;width:2px;height:46px;background:#c9d1d9"></div>
<div style="position:absolute;left:219px;top:339px;width:164.5px;height:73.5px;background:#fff;border:2px solid #0a78be;border-radius:10px;box-sizing:border-box"></div>
<svg style="position:absolute;left:241.5px;top:361px;overflow:visible;" width="29" height="25" viewBox="0 0 29 25"><path d="M2 4 Q2 1.5 4.5 1.5 H11 L14 4.5 H25.5 Q28 4.5 28 7 V21.5 Q28 24 25.5 24 H4.5 Q2 24 2 21.5 Z" fill="#0a78be"/></svg>
<div id="t26" style="position:absolute;left:285.5px;top:362.75px;font-family:'Liberation Sans', sans-serif;font-size:25px;line-height:25px;font-weight:700;color:#0a78be;white-space:nowrap;letter-spacing:-1.197px;">All ads</div>
<div style="position:absolute;left:399px;top:339px;width:174px;height:73.5px;background:#fff;border:2px solid #cfd5dc;border-radius:10px;box-sizing:border-box"></div>
<svg style="position:absolute;left:422px;top:357.5px;overflow:visible;" width="31" height="31" viewBox="0 0 31 31"><path d="M6 27 A13.5 13.5 0 1 1 25 27" fill="none" stroke="#1c2b33" stroke-width="3"/><path d="M15.5 24 V9 M9.5 14.5 L15.5 8.5 L21.5 14.5" fill="none" stroke="#1c2b33" stroke-width="3" stroke-linecap="round" stroke-linejoin="round"/></svg>
<div id="t27" style="position:absolute;left:465.3px;top:362.75px;font-family:'Liberation Sans', sans-serif;font-size:25px;line-height:25px;font-weight:400;color:#1c2b33;white-space:nowrap;letter-spacing:0.453px;">Actions</div>
<div style="position:absolute;left:589.5px;top:339.5px;width:229px;height:73px;background:#fff;border:2px solid #cfd5dc;border-radius:10px;box-sizing:border-box"></div>
<svg style="position:absolute;left:612px;top:361px;overflow:visible;" width="28" height="28" viewBox="0 0 28 28"><path d="M2 11 L14 2 L26 11 V26 H2 Z" fill="none" stroke="#1c2b33" stroke-width="2.6" stroke-linejoin="round"/><path d="M2 11 L14 20 L26 11 M2 26 L11 17 M26 26 L17 17" fill="none" stroke="#1c2b33" stroke-width="2.6"/></svg>
<div id="t28" style="position:absolute;left:655.3px;top:362.75px;font-family:'Liberation Sans', sans-serif;font-size:25px;line-height:25px;font-weight:400;color:#1c2b33;white-space:nowrap;letter-spacing:0.068px;">Had delivery</div>
<div style="position:absolute;left:834px;top:339.5px;width:205.5px;height:73px;background:#fff;border:2px solid #cfd5dc;border-radius:10px;box-sizing:border-box"></div>
<svg style="position:absolute;left:856px;top:361px;overflow:visible;" width="28" height="28" viewBox="0 0 28 28"><path d="M2 3 L26 13.5 L2 25 L5 13.5 Z M5 13.5 H14" fill="none" stroke="#1c2b33" stroke-width="2.6" stroke-linejoin="round"/></svg>
<div id="t29" style="position:absolute;left:900.6px;top:362.75px;font-family:'Liberation Sans', sans-serif;font-size:25px;line-height:25px;font-weight:400;color:#1c2b33;white-space:nowrap;letter-spacing:0.040px;">Active ads</div>
<svg style="position:absolute;left:1079px;top:365px;overflow:visible;" width="22" height="22" viewBox="0 0 22 22"><path d="M11 1 V21 M1 11 H21" stroke="#1c2b33" stroke-width="3"/></svg>
<div id="t30" style="position:absolute;left:1119px;top:363.75px;font-family:'Liberation Sans', sans-serif;font-size:25px;line-height:25px;font-weight:400;color:#1c2b33;white-space:nowrap;letter-spacing:-0.313px;">See more</div>
<div style="position:absolute;left:2164.5px;top:339.5px;width:210px;height:73px;background:transparent;border:2px solid #b9c2cb;border-radius:10px;box-sizing:border-box"></div>
<div id="t31" style="position:absolute;left:2193px;top:364.25px;font-family:'Liberation Sans', sans-serif;font-size:25px;line-height:25px;font-weight:400;color:#1c2b33;white-space:nowrap;letter-spacing:-0.005px;">Create a view</div>
<div style="position:absolute;left:2382.5px;top:339.5px;width:70.5px;height:73px;background:transparent;border:2px solid #b9c2cb;border-radius:10px;box-sizing:border-box"></div>
<svg style="position:absolute;left:2404px;top:364px;overflow:visible;" width="28" height="24" viewBox="0 0 28 24"><path d="M1 6 H4 M12 6 H27 M1 18 H15 M23 18 H27" stroke="#1c2b33" stroke-width="2.4"/><circle cx="8" cy="6" r="3.6" fill="none" stroke="#1c2b33" stroke-width="2.4"/><circle cx="19" cy="18" r="3.6" fill="none" stroke="#1c2b33" stroke-width="2.4"/></svg>
<div style="position:absolute;left:128px;top:427.5px;width:2325px;height:63.5px;background:#fff;border-radius:8px"></div>
<div id="t32" style="position:absolute;left:158.9px;top:447.55px;font-family:'Liberation Sans', sans-serif;font-size:25px;line-height:25px;font-weight:400;color:#67788a;white-space:nowrap;letter-spacing:0.184px;">Search to filter by name, ID or metrics</div>
<div style="position:absolute;left:128px;top:506.5px;width:338px;height:80px;background:#fff;border-radius:14px 14px 0 0"></div>
<svg style="position:absolute;left:151px;top:527px;overflow:visible;" width="39" height="36" viewBox="0 0 39 36"><path d="M0 4 Q0 0 4 0 H14 L18 4 H35 Q39 4 39 8 V32 Q39 36 35 36 H4 Q0 36 0 32 Z" fill="#0a78be"/><path d="M13 27 L19.5 13 L26 27 L19.5 23 Z" fill="#fff"/></svg>
<div id="t33" style="position:absolute;left:207.4px;top:532.60px;font-family:'Liberation Sans', sans-serif;font-size:28px;line-height:28px;font-weight:700;color:#0a78be;white-space:nowrap;letter-spacing:-0.655px;">Campaigns</div>
<div style="position:absolute;left:480px;top:513px;width:337px;height:72px;background:#fafbfc;border-radius:14px 14px 0 0"></div>
<svg style="position:absolute;left:503px;top:532px;overflow:visible;" width="33" height="33" viewBox="0 0 33 33"><rect x="1.5" y="1.5" width="12" height="12" rx="2.5" fill="none" stroke="#1c2b33" stroke-width="3"/><rect x="19.5" y="1.5" width="12" height="12" rx="2.5" fill="none" stroke="#1c2b33" stroke-width="3"/><rect x="1.5" y="19.5" width="12" height="12" rx="2.5" fill="none" stroke="#1c2b33" stroke-width="3"/><rect x="19.5" y="19.5" width="12" height="12" rx="2.5" fill="none" stroke="#1c2b33" stroke-width="3"/><circle cx="7.5" cy="7.5" r="2.6" fill="#1c2b33"/><circle cx="25.5" cy="25.5" r="2.6" fill="#1c2b33"/></svg>
<div id="t34" style="position:absolute;left:551.7px;top:535.00px;font-family:'Liberation Sans', sans-serif;font-size:28px;line-height:28px;font-weight:700;color:#1c2b33;white-space:nowrap;letter-spacing:-0.693px;">Ad sets</div>
<div style="position:absolute;left:831px;top:513px;width:338px;height:72px;background:#fafbfc;border-radius:14px 14px 0 0"></div>
<svg style="position:absolute;left:854.5px;top:533px;overflow:visible;" width="32" height="31" viewBox="0 0 32 31"><rect x="1.5" y="1.5" width="29" height="28" rx="3" fill="none" stroke="#1c2b33" stroke-width="3"/><path d="M13 8 H25" stroke="#1c2b33" stroke-width="2.6"/><circle cx="7" cy="8" r="2" fill="#1c2b33"/></svg>
<div id="t35" style="position:absolute;left:903.4px;top:535.00px;font-family:'Liberation Sans', sans-serif;font-size:28px;line-height:28px;font-weight:700;color:#1c2b33;white-space:nowrap;letter-spacing:-1.953px;">Ads</div>
<div style="position:absolute;left:1894px;top:506.5px;width:559px;height:62.5px;background:transparent;border:2px solid #b9c2cb;border-radius:10px;box-sizing:border-box"></div>
<svg style="position:absolute;left:1916px;top:524px;overflow:visible;" width="27" height="27" viewBox="0 0 27 27"><rect x="1.5" y="1.5" width="24" height="24" rx="4" fill="none" stroke="#1c2b33" stroke-width="2.6"/><path d="M7 6 H20 M2 11 H25 M2 18 H25 M9.5 11 V25 M17.5 11 V25" stroke="#1c2b33" stroke-width="2.2"/></svg>
<div id="t36" style="position:absolute;left:1958.8px;top:527.25px;font-family:'Liberation Sans', sans-serif;font-size:25px;line-height:25px;font-weight:400;color:#1c2b33;white-space:nowrap;letter-spacing:0.171px;">Maximum: 15 Dec 2022 - 15 Jan 2026</div>
<svg style="position:absolute;left:2409.0px;top:538.0px;overflow:visible;" width="17" height="10" viewBox="0 0 17 10"><path d="M0 0 L17 0 L8.5 10 Z" fill="#1c2b33" stroke="#1c2b33" stroke-width="2" stroke-linejoin="round"/></svg>
<div style="position:absolute;left:114px;top:585px;width:2353px;height:945px;background:#fff;border-radius:14px 14px 14px 14px;overflow:hidden"></div>
<div style="position:absolute;left:128px;top:584px;width:338px;height:4px;background:#fff"></div>
<div style="position:absolute;left:128px;top:598px;width:169.5px;height:64px;background:#006e52;border-radius:10px"></div>
<svg style="position:absolute;left:153px;top:608px;overflow:visible;" width="22" height="44" viewBox="0 0 22 44"><path d="M11 11 V33 M0 22 H22" stroke="#fff" stroke-width="3"/></svg>
<div id="t37" style="position:absolute;left:193px;top:619.35px;font-family:'Liberation Sans', sans-serif;font-size:25px;line-height:25px;font-weight:400;color:#fff;white-space:nowrap;letter-spacing:0.111px;">Create</div>
<div style="position:absolute;left:312.5px;top:598.5px;width:201.5px;height:63.5px;background:#fff;border:2px solid #cdd3da;border-radius:10px;box-sizing:border-box"></div>
<svg style="position:absolute;left:333px;top:615px;overflow:visible;" width="29" height="31" viewBox="0 0 29 31"><path d="M8 3 Q4 3 4 7 V26 Q4 30 8 30" fill="none" stroke="#808890" stroke-width="2.6"/><path d="M10 1 H21 L28 8 V25 Q28 28 25 28 H13 Q10 28 10 25 Z" fill="#808890"/><path d="M20 1 V8 H28" fill="#fff" stroke="#fff" stroke-width="1"/></svg>
<div id="t38" style="position:absolute;left:377.7px;top:619.35px;font-family:'Liberation Sans', sans-serif;font-size:25px;line-height:25px;font-weight:400;color:#7b858e;white-space:nowrap;letter-spacing:0.458px;">Duplicate</div>
<div style="position:absolute;left:529.5px;top:598.5px;width:138.5px;height:63.5px;background:#fff;border:2px solid #cdd3da;border-radius:10px;box-sizing:border-box"></div>
<svg style="position:absolute;left:551.8px;top:617px;overflow:visible;" width="26" height="26" viewBox="0 0 26 26"><path d="M2 24 L3 18 L18 3 L23 8 L8 23 Z M15.5 5.5 L20.5 10.5" fill="#7b858e" stroke="#7b858e" stroke-width="2" stroke-linejoin="round"/></svg>
<div id="t39" style="position:absolute;left:594.7px;top:619.35px;font-family:'Liberation Sans', sans-serif;font-size:25px;line-height:25px;font-weight:400;color:#7b858e;white-space:nowrap;letter-spacing:0.502px;">Edit</div>
<div style="position:absolute;left:683px;top:598px;width:2px;height:64px;background:#cdd3da"></div>
<div style="position:absolute;left:699.5px;top:599px;width:258px;height:62.5px;background:#fff;border:2px solid #b9c2cb;border-radius:10px;box-sizing:border-box"></div>
<div style="position:absolute;left:887px;top:599px;width:2px;height:62.5px;background:#b9c2cb"></div>
<svg style="position:absolute;left:721.7px;top:615px;overflow:visible;" width="25" height="30" viewBox="0 0 25 30"><path d="M8 1 H17 M9.5 1 V11 L1.5 25 Q0 29 4 29 H21 Q25 29 23.5 25 L15.5 11 V1" fill="none" stroke="#1c2b33" stroke-width="2.6" stroke-linejoin="round"/><path d="M5 19 Q12.5 15 20 19 L23 25 Q24 28 21 28 H4 Q1 28 2 25 Z" fill="#1c2b33"/></svg>
<div id="t40" style="position:absolute;left:764.4px;top:619.35px;font-family:'Liberation Sans', sans-serif;font-size:25px;line-height:25px;font-weight:400;color:#1c2b33;white-space:nowrap;letter-spacing:1.108px;">A/B test</div>
<svg style="position:absolute;left:914.0px;top:625.0px;overflow:visible;" width="17" height="10" viewBox="0 0 17 10"><path d="M0 0 L17 0 L8.5 10 Z" fill="#1c2b33" stroke="#1c2b33" stroke-width="2" stroke-linejoin="round"/></svg>
<div id="t41" style="position:absolute;left:1002.5px;top:619.35px;font-family:'Liberation Sans', sans-serif;font-size:25px;line-height:25px;font-weight:400;color:#1c2b33;white-space:nowrap;letter-spacing:0.177px;">More</div>
<svg style="position:absolute;left:1081.5px;top:625.0px;overflow:visible;" width="17" height="10" viewBox="0 0 17 10"><path d="M0 0 L17 0 L8.5 10 Z" fill="#1c2b33" stroke="#1c2b33" stroke-width="2" stroke-linejoin="round"/></svg>
<div style="position:absolute;left:1207.5px;top:599px;width:506px;height:62.5px;background:#fff;border:2px solid #b9c2cb;border-radius:10px;box-sizing:border-box"></div>
<svg style="position:absolute;left:1228.4px;top:619px;overflow:visible;" width="29" height="23" viewBox="0 0 29 23"><rect x="0" y="0" width="8" height="23" rx="1" fill="#1c2b33"/><rect x="10.5" y="0" width="8" height="23" rx="1" fill="#1c2b33"/><rect x="21" y="0" width="8" height="23" rx="1" fill="#1c2b33"/></svg>
<div id="t42" style="position:absolute;left:1272.2px;top:619.35px;font-family:'Liberation Sans', sans-serif;font-size:25px;line-height:25px;font-weight:400;color:#1c2b33;white-space:nowrap;letter-spacing:0.161px;">Columns: Performance and clicks</div>
<svg style="position:absolute;left:1669.5px;top:625.0px;overflow:visible;" width="17" height="10" viewBox="0 0 17 10"><path d="M0 0 L17 0 L8.5 10 Z" fill="#1c2b33" stroke="#1c2b33" stroke-width="2" stroke-linejoin="round"/></svg>
<div style="position:absolute;left:1728.5px;top:599px;width:257.5px;height:62.5px;background:#fff;border:2px solid #b9c2cb;border-radius:10px;box-sizing:border-box"></div>
<svg style="position:absolute;left:1751px;top:618px;overflow:visible;" width="25" height="26" viewBox="0 0 25 26"><rect x="0" y="0" width="25" height="6.5" fill="#1c2b33"/><rect x="7" y="9.5" width="18" height="6.5" fill="#1c2b33"/><rect x="7" y="19" width="18" height="6.5" fill="#1c2b33"/></svg>
<div id="t43" style="position:absolute;left:1794px;top:619.35px;font-family:'Liberation Sans', sans-serif;font-size:25px;line-height:25px;font-weight:400;color:#1c2b33;white-space:nowrap;letter-spacing:0.365px;">Breakdown</div>
<svg style="position:absolute;left:1943.0px;top:625.0px;overflow:visible;" width="17" height="10" viewBox="0 0 17 10"><path d="M0 0 L17 0 L8.5 10 Z" fill="#1c2b33" stroke="#1c2b33" stroke-width="2" stroke-linejoin="round"/></svg>
<div style="position:absolute;left:2001.3px;top:599px;width:112.7px;height:62.5px;background:#fff;border:2px solid #b9c2cb;border-radius:10px;box-sizing:border-box"></div>
<svg style="position:absolute;left:2022px;top:616px;overflow:visible;" width="29" height="29" viewBox="0 0 29 29"><path d="M1 2 Q1 0 3 0 H19 Q21 0 21 2 V23 Q21 25 19 25 H3 Q1 25 1 23 Z" fill="#1c2b33"/><path d="M4 1 V24" stroke="#fff" stroke-width="1.5"/><path d="M8 6 H17 M8 10 H17" stroke="#fff" stroke-width="2"/><path d="M22 4 L28 6 L24 28 L6 26" fill="none" stroke="#1c2b33" stroke-width="2.6"/></svg>
<svg style="position:absolute;left:2074.5px;top:625.0px;overflow:visible;" width="17" height="10" viewBox="0 0 17 10"><path d="M0 0 L17 0 L8.5 10 Z" fill="#1c2b33" stroke="#1c2b33" stroke-width="2" stroke-linejoin="round"/></svg>
<div style="position:absolute;left:2129.6px;top:599px;width:138.8px;height:62.5px;background:#fff;border:2px solid #b9c2cb;border-radius:10px;box-sizing:border-box"></div>
<div style="position:absolute;left:2198px;top:599px;width:2px;height:62.5px;background:#b9c2cb"></div>
<svg style="position:absolute;left:2151px;top:617px;overflow:visible;" width="28" height="28" viewBox="0 0 28 28"><path d="M12 3 H4 Q2 3 2 5 V24 Q2 26 4 26 H23 Q25 26 25 24 V16" fill="none" stroke="#1c2b33" stroke-width="3" stroke-linecap="round"/><path d="M13 15 L25 3 M17 2.5 H25.5 V11" fill="none" stroke="#1c2b33" stroke-width="3" stroke-linecap="round" stroke-linejoin="round"/></svg>
<svg style="position:absolute;left:2225.5px;top:625.0px;overflow:visible;" width="17" height="10" viewBox="0 0 17 10"><path d="M0 0 L17 0 L8.5 10 Z" fill="#1c2b33" stroke="#1c2b33" stroke-width="2" stroke-linejoin="round"/></svg>
<div style="position:absolute;left:2284.3px;top:599px;width:168.2px;height:62.5px;background:#fff;border:2px solid #b9c2cb;border-radius:10px;box-sizing:border-box"></div>
<svg style="position:absolute;left:2304.8px;top:616px;overflow:visible;" width="28" height="28" viewBox="0 0 28 28"><rect x="1.5" y="1.5" width="25" height="25" rx="3" fill="none" stroke="#1c2b33" stroke-width="2.6"/><path d="M6 20 L12 13 L16 17 L22 9 M17 8.5 H22.5 V14" fill="none" stroke="#1c2b33" stroke-width="2.4" stroke-linejoin="round" stroke-linecap="round"/></svg>
<div id="t44" style="position:absolute;left:2348.4px;top:619.35px;font-family:'Liberation Sans', sans-serif;font-size:25px;line-height:25px;font-weight:400;color:#1c2b33;white-space:nowrap;letter-spacing:0.352px;">Charts</div>
<div style="position:absolute;left:114px;top:675.5px;width:2353px;height:1.5px;background:#d5d9de"></div>
<div style="position:absolute;left:0;top:0;width:2560px;height:1600px;clip-path:inset(763.5px 93px 229px 114px)">
<div style="position:absolute;left:114px;top:763.5px;width:2353px;height:84.95000000000005px;background:#f5f6f8"></div>
<div id="t45" style="position:absolute;right:1508.5px;top:780.55px;font-family:'Liberation Sans', sans-serif;font-size:25px;line-height:25px;font-weight:400;color:#1c2b33;white-space:nowrap;letter-spacing:0.4px;">52</div>
<div id="t46" style="position:absolute;right:1508.6000000000001px;top:816.65px;font-family:'Liberation Sans', sans-serif;font-size:21px;line-height:21px;font-weight:400;color:#67737d;white-space:nowrap;letter-spacing:0.3px;">eads (Form)</div>
<div id="t47" style="position:absolute;right:1248.3999999999999px;top:780.55px;font-family:'Liberation Sans', sans-serif;font-size:25px;line-height:25px;font-weight:400;color:#1c2b33;white-space:nowrap;letter-spacing:0.4px;">33,286</div>
<div id="t48" style="position:absolute;right:988.8999999999999px;top:780.55px;font-family:'Liberation Sans', sans-serif;font-size:25px;line-height:25px;font-weight:400;color:#1c2b33;white-space:nowrap;letter-spacing:0.4px;">1.38</div>
<div id="t49" style="position:absolute;right:729.8999999999999px;top:780.55px;font-family:'Liberation Sans', sans-serif;font-size:25px;line-height:25px;font-weight:400;color:#1c2b33;white-space:nowrap;letter-spacing:0.4px;">₹129.05</div>
<div id="t50" style="position:absolute;right:730.0px;top:816.65px;font-family:'Liberation Sans', sans-serif;font-size:21px;line-height:21px;font-weight:400;color:#67737d;white-space:nowrap;letter-spacing:0.3px;">Per lead (form)</div>
<div id="t51" style="position:absolute;left:1861.9px;top:780.55px;font-family:'Liberation Sans', sans-serif;font-size:25px;line-height:25px;font-weight:400;color:#1c2b33;white-space:nowrap;letter-spacing:0.102px;">Using ad set bu...</div>
<div id="t52" style="position:absolute;right:232.0px;top:780.55px;font-family:'Liberation Sans', sans-serif;font-size:25px;line-height:25px;font-weight:400;color:#1c2b33;white-space:nowrap;letter-spacing:0.4px;">₹6,710.42</div>
<div id="t53" style="position:absolute;right:90.59999999999991px;top:780.55px;font-family:'Liberation Sans', sans-serif;font-size:25px;line-height:25px;font-weight:400;color:#1c2b33;white-space:nowrap;letter-spacing:0.4px;">On</div>
<div style="position:absolute;left:114px;top:848.45px;width:2353px;height:81.75px;background:#ffffff"></div>
<div id="t54" style="position:absolute;right:1508.5px;top:862.30px;font-family:'Liberation Sans', sans-serif;font-size:25px;line-height:25px;font-weight:400;color:#1c2b33;white-space:nowrap;letter-spacing:0.4px;">21</div>
<div id="t55" style="position:absolute;right:1508.6000000000001px;top:898.40px;font-family:'Liberation Sans', sans-serif;font-size:21px;line-height:21px;font-weight:400;color:#67737d;white-space:nowrap;letter-spacing:0.3px;">eads (Form)</div>
<div id="t56" style="position:absolute;right:1248.3999999999999px;top:862.30px;font-family:'Liberation Sans', sans-serif;font-size:25px;line-height:25px;font-weight:400;color:#1c2b33;white-space:nowrap;letter-spacing:0.4px;">5,157</div>
<div id="t57" style="position:absolute;right:988.8999999999999px;top:862.30px;font-family:'Liberation Sans', sans-serif;font-size:25px;line-height:25px;font-weight:400;color:#1c2b33;white-space:nowrap;letter-spacing:0.4px;">1.97</div>
<div id="t58" style="position:absolute;right:729.8999999999999px;top:862.30px;font-family:'Liberation Sans', sans-serif;font-size:25px;line-height:25px;font-weight:400;color:#1c2b33;white-space:nowrap;letter-spacing:0.4px;">₹161.42</div>
<div id="t59" style="position:absolute;right:730.0px;top:898.40px;font-family:'Liberation Sans', sans-serif;font-size:21px;line-height:21px;font-weight:400;color:#67737d;white-space:nowrap;letter-spacing:0.3px;">Per lead (form)</div>
<div id="t60" style="position:absolute;left:1861.9px;top:862.30px;font-family:'Liberation Sans', sans-serif;font-size:25px;line-height:25px;font-weight:400;color:#1c2b33;white-space:nowrap;letter-spacing:0.102px;">Using ad set bu...</div>
<div id="t61" style="position:absolute;right:232.0px;top:862.30px;font-family:'Liberation Sans', sans-serif;font-size:25px;line-height:25px;font-weight:400;color:#1c2b33;white-space:nowrap;letter-spacing:0.4px;">₹3,389.85</div>
<div id="t62" style="position:absolute;right:90.59999999999991px;top:862.30px;font-family:'Liberation Sans', sans-serif;font-size:25px;line-height:25px;font-weight:400;color:#1c2b33;white-space:nowrap;letter-spacing:0.4px;">On</div>
<div style="position:absolute;left:114px;top:930.2px;width:2353px;height:81.75px;background:#f5f6f8"></div>
<div id="t63" style="position:absolute;right:1508.5px;top:944.05px;font-family:'Liberation Sans', sans-serif;font-size:25px;line-height:25px;font-weight:400;color:#1c2b33;white-space:nowrap;letter-spacing:0.4px;">182</div>
<div id="t64" style="position:absolute;right:1508.6000000000001px;top:980.15px;font-family:'Liberation Sans', sans-serif;font-size:21px;line-height:21px;font-weight:400;color:#67737d;white-space:nowrap;letter-spacing:0.3px;">eads (Form)</div>
<div id="t65" style="position:absolute;right:1248.3999999999999px;top:944.05px;font-family:'Liberation Sans', sans-serif;font-size:25px;line-height:25px;font-weight:400;color:#1c2b33;white-space:nowrap;letter-spacing:0.4px;">38,362</div>
<div id="t66" style="position:absolute;right:988.8999999999999px;top:944.05px;font-family:'Liberation Sans', sans-serif;font-size:25px;line-height:25px;font-weight:400;color:#1c2b33;white-space:nowrap;letter-spacing:0.4px;">2.07</div>
<div id="t67" style="position:absolute;right:729.8999999999999px;top:944.05px;font-family:'Liberation Sans', sans-serif;font-size:25px;line-height:25px;font-weight:400;color:#1c2b33;white-space:nowrap;letter-spacing:0.4px;">₹55.47</div>
<div id="t68" style="position:absolute;right:730.0px;top:980.15px;font-family:'Liberation Sans', sans-serif;font-size:21px;line-height:21px;font-weight:400;color:#67737d;white-space:nowrap;letter-spacing:0.3px;">Per lead (form)</div>
<div id="t69" style="position:absolute;left:1861.9px;top:944.05px;font-family:'Liberation Sans', sans-serif;font-size:25px;line-height:25px;font-weight:400;color:#1c2b33;white-space:nowrap;letter-spacing:0.102px;">Using ad set bu...</div>
<div id="t70" style="position:absolute;right:232.0px;top:944.05px;font-family:'Liberation Sans', sans-serif;font-size:25px;line-height:25px;font-weight:400;color:#1c2b33;white-space:nowrap;letter-spacing:0.4px;">₹10,095.01</div>
<div id="t71" style="position:absolute;right:90.59999999999991px;top:944.05px;font-family:'Liberation Sans', sans-serif;font-size:25px;line-height:25px;font-weight:400;color:#1c2b33;white-space:nowrap;letter-spacing:0.4px;">On</div>
<div style="position:absolute;left:114px;top:1011.95px;width:2353px;height:81.75px;background:#e5e5e5"></div>
<div id="t72" style="position:absolute;right:1508.5px;top:1025.80px;font-family:'Liberation Sans', sans-serif;font-size:25px;line-height:25px;font-weight:400;color:#1c2b33;white-space:nowrap;letter-spacing:0.4px;">277</div>
<div id="t73" style="position:absolute;right:1508.6000000000001px;top:1061.90px;font-family:'Liberation Sans', sans-serif;font-size:21px;line-height:21px;font-weight:400;color:#67737d;white-space:nowrap;letter-spacing:0.3px;">eads (Form)</div>
<div id="t74" style="position:absolute;right:1248.3999999999999px;top:1025.80px;font-family:'Liberation Sans', sans-serif;font-size:25px;line-height:25px;font-weight:400;color:#1c2b33;white-space:nowrap;letter-spacing:0.4px;">146,822</div>
<div id="t75" style="position:absolute;right:988.8999999999999px;top:1025.80px;font-family:'Liberation Sans', sans-serif;font-size:25px;line-height:25px;font-weight:400;color:#1c2b33;white-space:nowrap;letter-spacing:0.4px;">2.07</div>
<div id="t76" style="position:absolute;right:729.8999999999999px;top:1025.80px;font-family:'Liberation Sans', sans-serif;font-size:25px;line-height:25px;font-weight:400;color:#1c2b33;white-space:nowrap;letter-spacing:0.4px;">₹120.81</div>
<div id="t77" style="position:absolute;right:730.0px;top:1061.90px;font-family:'Liberation Sans', sans-serif;font-size:21px;line-height:21px;font-weight:400;color:#67737d;white-space:nowrap;letter-spacing:0.3px;">Per lead (form)</div>
<div id="t78" style="position:absolute;left:1861.9px;top:1025.80px;font-family:'Liberation Sans', sans-serif;font-size:25px;line-height:25px;font-weight:400;color:#1c2b33;white-space:nowrap;letter-spacing:0.102px;">Using ad set bu...</div>
<div id="t79" style="position:absolute;right:232.0px;top:1025.80px;font-family:'Liberation Sans', sans-serif;font-size:25px;line-height:25px;font-weight:400;color:#1c2b33;white-space:nowrap;letter-spacing:0.4px;">₹33,464.13</div>
<div id="t80" style="position:absolute;right:90.59999999999991px;top:1025.80px;font-family:'Liberation Sans', sans-serif;font-size:25px;line-height:25px;font-weight:400;color:#1c2b33;white-space:nowrap;letter-spacing:0.4px;">On</div>
<div style="position:absolute;left:114px;top:1093.7px;width:2353px;height:81.75px;background:#f5f6f8"></div>
<div id="t81" style="position:absolute;right:1508.5px;top:1107.55px;font-family:'Liberation Sans', sans-serif;font-size:25px;line-height:25px;font-weight:400;color:#1c2b33;white-space:nowrap;letter-spacing:0.4px;">179</div>
<div id="t82" style="position:absolute;right:1508.6000000000001px;top:1143.65px;font-family:'Liberation Sans', sans-serif;font-size:21px;line-height:21px;font-weight:400;color:#67737d;white-space:nowrap;letter-spacing:0.3px;">eads (Form)</div>
<div id="t83" style="position:absolute;right:1248.3999999999999px;top:1107.55px;font-family:'Liberation Sans', sans-serif;font-size:25px;line-height:25px;font-weight:400;color:#1c2b33;white-space:nowrap;letter-spacing:0.4px;">38,367</div>
<div id="t84" style="position:absolute;right:988.8999999999999px;top:1107.55px;font-family:'Liberation Sans', sans-serif;font-size:25px;line-height:25px;font-weight:400;color:#1c2b33;white-space:nowrap;letter-spacing:0.4px;">2.16</div>
<div id="t85" style="position:absolute;right:729.8999999999999px;top:1107.55px;font-family:'Liberation Sans', sans-serif;font-size:25px;line-height:25px;font-weight:400;color:#1c2b33;white-space:nowrap;letter-spacing:0.4px;">₹71.66</div>
<div id="t86" style="position:absolute;right:730.0px;top:1143.65px;font-family:'Liberation Sans', sans-serif;font-size:21px;line-height:21px;font-weight:400;color:#67737d;white-space:nowrap;letter-spacing:0.3px;">Per lead (form)</div>
<div id="t87" style="position:absolute;left:1861.9px;top:1107.55px;font-family:'Liberation Sans', sans-serif;font-size:25px;line-height:25px;font-weight:400;color:#1c2b33;white-space:nowrap;letter-spacing:0.102px;">Using ad set bu...</div>
<div id="t88" style="position:absolute;right:232.0px;top:1107.55px;font-family:'Liberation Sans', sans-serif;font-size:25px;line-height:25px;font-weight:400;color:#1c2b33;white-space:nowrap;letter-spacing:0.4px;">₹12,827.45</div>
<div id="t89" style="position:absolute;right:90.59999999999991px;top:1107.55px;font-family:'Liberation Sans', sans-serif;font-size:25px;line-height:25px;font-weight:400;color:#1c2b33;white-space:nowrap;letter-spacing:0.4px;">On</div>
<div style="position:absolute;left:114px;top:1175.45px;width:2353px;height:81.75px;background:#ffffff"></div>
<div id="t90" style="position:absolute;right:1508.5px;top:1189.30px;font-family:'Liberation Sans', sans-serif;font-size:25px;line-height:25px;font-weight:400;color:#1c2b33;white-space:nowrap;letter-spacing:0.4px;">54</div>
<div id="t91" style="position:absolute;right:1508.6000000000001px;top:1225.40px;font-family:'Liberation Sans', sans-serif;font-size:21px;line-height:21px;font-weight:400;color:#67737d;white-space:nowrap;letter-spacing:0.3px;">profile visits</div>
<div id="t92" style="position:absolute;right:1248.3999999999999px;top:1189.30px;font-family:'Liberation Sans', sans-serif;font-size:25px;line-height:25px;font-weight:400;color:#1c2b33;white-space:nowrap;letter-spacing:0.4px;">11,827</div>
<div id="t93" style="position:absolute;right:988.8999999999999px;top:1189.30px;font-family:'Liberation Sans', sans-serif;font-size:25px;line-height:25px;font-weight:400;color:#1c2b33;white-space:nowrap;letter-spacing:0.4px;">1.06</div>
<div id="t94" style="position:absolute;right:729.8999999999999px;top:1189.30px;font-family:'Liberation Sans', sans-serif;font-size:25px;line-height:25px;font-weight:400;color:#1c2b33;white-space:nowrap;letter-spacing:0.4px;">₹1.83</div>
<div id="t95" style="position:absolute;right:730.0px;top:1225.40px;font-family:'Liberation Sans', sans-serif;font-size:21px;line-height:21px;font-weight:400;color:#67737d;white-space:nowrap;letter-spacing:0.3px;">Per Instagram profile ...</div>
<div id="t96" style="position:absolute;right:491.4000000000001px;top:1189.30px;font-family:'Liberation Sans', sans-serif;font-size:25px;line-height:25px;font-weight:400;color:#1c2b33;white-space:nowrap;letter-spacing:0.4px;">₹182.00</div>
<div id="t97" style="position:absolute;right:491.5px;top:1225.40px;font-family:'Liberation Sans', sans-serif;font-size:21px;line-height:21px;font-weight:400;color:#67737d;white-space:nowrap;letter-spacing:0.3px;">Daily average</div>
<div id="t98" style="position:absolute;right:232.0px;top:1189.30px;font-family:'Liberation Sans', sans-serif;font-size:25px;line-height:25px;font-weight:400;color:#1c2b33;white-space:nowrap;letter-spacing:0.4px;">₹98.59</div>
<div id="t99" style="position:absolute;right:90.59999999999991px;top:1189.30px;font-family:'Liberation Sans', sans-serif;font-size:25px;line-height:25px;font-weight:400;color:#1c2b33;white-space:nowrap;letter-spacing:0.4px;">On</div>
<div style="position:absolute;left:114px;top:1257.2px;width:2353px;height:81.75px;background:#f5f6f8"></div>
<div id="t100" style="position:absolute;right:1508.5px;top:1271.05px;font-family:'Liberation Sans', sans-serif;font-size:25px;line-height:25px;font-weight:400;color:#1c2b33;white-space:nowrap;letter-spacing:0.4px;">2</div>
<div id="t101" style="position:absolute;right:1508.6000000000001px;top:1307.15px;font-family:'Liberation Sans', sans-serif;font-size:21px;line-height:21px;font-weight:400;color:#67737d;white-space:nowrap;letter-spacing:0.3px;">eads (Form)</div>
<div id="t102" style="position:absolute;right:1248.3999999999999px;top:1271.05px;font-family:'Liberation Sans', sans-serif;font-size:25px;line-height:25px;font-weight:400;color:#1c2b33;white-space:nowrap;letter-spacing:0.4px;">1,185</div>
<div id="t103" style="position:absolute;right:988.8999999999999px;top:1271.05px;font-family:'Liberation Sans', sans-serif;font-size:25px;line-height:25px;font-weight:400;color:#1c2b33;white-space:nowrap;letter-spacing:0.4px;">1.32</div>
<div id="t104" style="position:absolute;right:729.8999999999999px;top:1271.05px;font-family:'Liberation Sans', sans-serif;font-size:25px;line-height:25px;font-weight:400;color:#1c2b33;white-space:nowrap;letter-spacing:0.4px;">₹127.12</div>
<div id="t105" style="position:absolute;right:730.0px;top:1307.15px;font-family:'Liberation Sans', sans-serif;font-size:21px;line-height:21px;font-weight:400;color:#67737d;white-space:nowrap;letter-spacing:0.3px;">Per lead (form)</div>
<div id="t106" style="position:absolute;left:1861.9px;top:1271.05px;font-family:'Liberation Sans', sans-serif;font-size:25px;line-height:25px;font-weight:400;color:#1c2b33;white-space:nowrap;letter-spacing:0.102px;">Using ad set bu...</div>
<div id="t107" style="position:absolute;right:232.0px;top:1271.05px;font-family:'Liberation Sans', sans-serif;font-size:25px;line-height:25px;font-weight:400;color:#1c2b33;white-space:nowrap;letter-spacing:0.4px;">₹254.23</div>
<div id="t108" style="position:absolute;right:90.59999999999991px;top:1271.05px;font-family:'Liberation Sans', sans-serif;font-size:25px;line-height:25px;font-weight:400;color:#1c2b33;white-space:nowrap;letter-spacing:0.4px;">On</div>
<div style="position:absolute;left:114px;top:1338.95px;width:2353px;height:81.75px;background:#ffffff"></div>
<div id="t109" style="position:absolute;right:1508.5px;top:1352.80px;font-family:'Liberation Sans', sans-serif;font-size:25px;line-height:25px;font-weight:400;color:#1c2b33;white-space:nowrap;letter-spacing:0.4px;">2</div>
<div id="t110" style="position:absolute;right:1508.6000000000001px;top:1388.90px;font-family:'Liberation Sans', sans-serif;font-size:21px;line-height:21px;font-weight:400;color:#67737d;white-space:nowrap;letter-spacing:0.3px;">eads (Form)</div>
<div id="t111" style="position:absolute;right:1248.3999999999999px;top:1352.80px;font-family:'Liberation Sans', sans-serif;font-size:25px;line-height:25px;font-weight:400;color:#1c2b33;white-space:nowrap;letter-spacing:0.4px;">5,178</div>
<div id="t112" style="position:absolute;right:988.8999999999999px;top:1352.80px;font-family:'Liberation Sans', sans-serif;font-size:25px;line-height:25px;font-weight:400;color:#1c2b33;white-space:nowrap;letter-spacing:0.4px;">1.37</div>
<div id="t113" style="position:absolute;right:729.8999999999999px;top:1352.80px;font-family:'Liberation Sans', sans-serif;font-size:25px;line-height:25px;font-weight:400;color:#1c2b33;white-space:nowrap;letter-spacing:0.4px;">₹607.43</div>
<div id="t114" style="position:absolute;right:730.0px;top:1388.90px;font-family:'Liberation Sans', sans-serif;font-size:21px;line-height:21px;font-weight:400;color:#67737d;white-space:nowrap;letter-spacing:0.3px;">Per lead (form)</div>
<div id="t115" style="position:absolute;right:491.4000000000001px;top:1352.80px;font-family:'Liberation Sans', sans-serif;font-size:25px;line-height:25px;font-weight:400;color:#1c2b33;white-space:nowrap;letter-spacing:0.4px;">₹500.00</div>
<div id="t116" style="position:absolute;right:491.5px;top:1388.90px;font-family:'Liberation Sans', sans-serif;font-size:21px;line-height:21px;font-weight:400;color:#67737d;white-space:nowrap;letter-spacing:0.3px;">Daily average</div>
<div id="t117" style="position:absolute;right:232.0px;top:1352.80px;font-family:'Liberation Sans', sans-serif;font-size:25px;line-height:25px;font-weight:400;color:#1c2b33;white-space:nowrap;letter-spacing:0.4px;">₹1,214.87</div>
<div id="t118" style="position:absolute;right:90.59999999999991px;top:1352.80px;font-family:'Liberation Sans', sans-serif;font-size:25px;line-height:25px;font-weight:400;color:#1c2b33;white-space:nowrap;letter-spacing:0.4px;">On</div>
<div style="position:absolute;left:1066.5px;top:763.5px;width:2px;height:607.5px;background:#dfe1e5"></div>
<div style="position:absolute;left:1326px;top:763.5px;width:2px;height:607.5px;background:#dfe1e5"></div>
<div style="position:absolute;left:1585.5px;top:763.5px;width:2px;height:607.5px;background:#dfe1e5"></div>
<div style="position:absolute;left:1845px;top:763.5px;width:2px;height:607.5px;background:#dfe1e5"></div>
<div style="position:absolute;left:2083px;top:763.5px;width:2px;height:607.5px;background:#dfe1e5"></div>
<div style="position:absolute;left:2343px;top:763.5px;width:2px;height:607.5px;background:#dfe1e5"></div>
<div style="position:absolute;left:114px;top:763.5px;width:823.5px;height:84.95000000000005px;background:#f5f6f8"></div>
<div style="position:absolute;left:135.55px;top:786.825px;width:41.5px;height:41.5px;background:#fff;border:2px solid #ccd3da;border-radius:7px;box-sizing:border-box"></div>
<div style="position:absolute;left:249.89999999999998px;top:788.575px;width:67px;height:38px;background:#ddeaf6;border:1.5px solid #cdd6df;border-radius:19px;box-sizing:border-box"></div>
<div style="position:absolute;left:280.4px;top:790.075px;width:35px;height:35px;background:#0a78be;border-radius:50%;box-shadow:0 0 1px rgba(0,0,0,.3)"></div>
<div id="t119" style="position:absolute;left:383px;top:780.55px;font-family:'Liberation Sans', sans-serif;font-size:25px;line-height:25px;font-weight:400;color:#1a65c9;white-space:nowrap;letter-spacing:0.109px;">Codename Beyond 07 Oct 25</div>
<div style="position:absolute;left:114px;top:848.45px;width:823.5px;height:81.75px;background:#ffffff"></div>
<div style="position:absolute;left:135.55px;top:868.575px;width:41.5px;height:41.5px;background:#fff;border:2px solid #ccd3da;border-radius:7px;box-sizing:border-box"></div>
<div style="position:absolute;left:249.89999999999998px;top:870.325px;width:67px;height:38px;background:#ddeaf6;border:1.5px solid #cdd6df;border-radius:19px;box-sizing:border-box"></div>
<div style="position:absolute;left:280.4px;top:871.825px;width:35px;height:35px;background:#0a78be;border-radius:50%;box-shadow:0 0 1px rgba(0,0,0,.3)"></div>
<div id="t120" style="position:absolute;left:383px;top:862.30px;font-family:'Liberation Sans', sans-serif;font-size:25px;line-height:25px;font-weight:400;color:#1a65c9;white-space:nowrap;letter-spacing:0.226px;">Luxury Properties Carousel Ad 8 Dec 2025</div>
<div style="position:absolute;left:114px;top:930.2px;width:823.5px;height:81.75px;background:#f5f6f8"></div>
<div style="position:absolute;left:135.55px;top:950.325px;width:41.5px;height:41.5px;background:#fff;border:2px solid #ccd3da;border-radius:7px;box-sizing:border-box"></div>
<div style="position:absolute;left:249.89999999999998px;top:952.075px;width:67px;height:38px;background:#ddeaf6;border:1.5px solid #cdd6df;border-radius:19px;box-sizing:border-box"></div>
<div style="position:absolute;left:280.4px;top:953.575px;width:35px;height:35px;background:#0a78be;border-radius:50%;box-shadow:0 0 1px rgba(0,0,0,.3)"></div>
<div id="t121" style="position:absolute;left:383px;top:944.05px;font-family:'Liberation Sans', sans-serif;font-size:25px;line-height:25px;font-weight:400;color:#1a65c9;white-space:nowrap;letter-spacing:0.328px;">Pavingstone lead Ads 06 Aug 2025</div>
<div style="position:absolute;left:114px;top:1011.95px;width:823.5px;height:81.75px;background:#e5e5e5"></div>
<div style="position:absolute;left:135.55px;top:1032.075px;width:41.5px;height:41.5px;background:#fff;border:2px solid #ccd3da;border-radius:7px;box-sizing:border-box"></div>
<div style="position:absolute;left:249.89999999999998px;top:1033.825px;width:67px;height:38px;background:#ddeaf6;border:1.5px solid #cdd6df;border-radius:19px;box-sizing:border-box"></div>
<div style="position:absolute;left:280.4px;top:1035.325px;width:35px;height:35px;background:#0a78be;border-radius:50%;box-shadow:0 0 1px rgba(0,0,0,.3)"></div>
<div id="t122" style="position:absolute;left:383px;top:1025.80px;font-family:'Liberation Sans', sans-serif;font-size:25px;line-height:25px;font-weight:400;color:#1a65c9;white-space:nowrap;letter-spacing:0.258px;">Test – TATA Ariana 3rd Aug 2025</div>
<svg style="position:absolute;left:770.4px;top:1026.45px;overflow:visible;" width="21" height="21" viewBox="0 0 21 21"><path d="M1 20 L2 15 L14 3 L18 7 L6 19 Z M16 1 L20 5" fill="#44515b" stroke="#44515b" stroke-width="2" stroke-linejoin="round"/></svg>
<svg style="position:absolute;left:901px;top:1026.95px;overflow:visible;" width="22" height="22" viewBox="0 0 22 22"><path d="M12 2 L20 10 L17 11 L13 15 L13 19 L3 9 L7 9 L11 5 Z" fill="#8a939b"/><path d="M8 14 L2 20" stroke="#8a939b" stroke-width="2" stroke-linecap="round"/></svg>
<svg style="position:absolute;left:383px;top:1063.95px;overflow:visible;" width="20" height="21" viewBox="0 0 20 21"><rect x="0" y="13" width="4" height="8" rx="1" fill="#1c2b33"/><rect x="5.5" y="7" width="4" height="14" rx="1" fill="#1c2b33"/><rect x="11" y="10" width="4" height="11" rx="1" fill="#1c2b33"/><rect x="16" y="1" width="4" height="20" rx="1" fill="#1c2b33"/></svg>
<div id="t123" style="position:absolute;left:412px;top:1063.30px;font-family:'Liberation Sans', sans-serif;font-size:21px;line-height:21px;font-weight:400;color:#1c2b33;white-space:nowrap;letter-spacing:0.328px;">Charts</div>
<svg style="position:absolute;left:498.4px;top:1064.95px;overflow:visible;" width="21" height="21" viewBox="0 0 21 21"><path d="M1 20 L2 15 L14 3 L18 7 L6 19 Z M16 1 L20 5" fill="#1c2b33" stroke="#1c2b33" stroke-width="2" stroke-linejoin="round"/></svg>
<div id="t124" style="position:absolute;left:527.3px;top:1063.30px;font-family:'Liberation Sans', sans-serif;font-size:21px;line-height:21px;font-weight:400;color:#1c2b33;white-space:nowrap;letter-spacing:0.504px;">Edit</div>
<svg style="position:absolute;left:587.9px;top:1063.95px;overflow:visible;" width="21" height="23" viewBox="0 0 21 23"><path d="M5 2 Q2 2 2 5 V19 Q2 22 5 22" fill="none" stroke="#1c2b33" stroke-width="2"/><path d="M7 0.5 H15 L20 5.5 V18 Q20 20.5 17.5 20.5 H9.5 Q7 20.5 7 18 Z" fill="#1c2b33"/></svg>
<div id="t125" style="position:absolute;left:617.3px;top:1063.30px;font-family:'Liberation Sans', sans-serif;font-size:21px;line-height:21px;font-weight:400;color:#1c2b33;white-space:nowrap;letter-spacing:0.480px;">Duplicate</div>
<div style="position:absolute;left:730.3px;top:1064.15px;width:21.2px;height:21px;background:#1c2b33;border-radius:3px"></div>
<svg style="position:absolute;left:733px;top:1067.95px;overflow:visible;" width="16" height="14" viewBox="0 0 16 14"><path d="M1 12 L6 6 L9 9 L15 2 M10 1.5 H15 V6.5" fill="none" stroke="#fff" stroke-width="2" stroke-linecap="round" stroke-linejoin="round"/></svg>
<div style="position:absolute;left:797.5px;top:1070.95px;width:4.8px;height:4.8px;background:#1c2b33;border-radius:50%"></div>
<div style="position:absolute;left:806.3px;top:1070.95px;width:4.8px;height:4.8px;background:#1c2b33;border-radius:50%"></div>
<div style="position:absolute;left:815.1px;top:1070.95px;width:4.8px;height:4.8px;background:#1c2b33;border-radius:50%"></div>
<div style="position:absolute;left:114px;top:1093.7px;width:823.5px;height:81.75px;background:#f5f6f8"></div>
<div style="position:absolute;left:135.55px;top:1113.825px;width:41.5px;height:41.5px;background:#fff;border:2px solid #ccd3da;border-radius:7px;box-sizing:border-box"></div>
<div style="position:absolute;left:249.89999999999998px;top:1115.575px;width:67px;height:38px;background:#ddeaf6;border:1.5px solid #cdd6df;border-radius:19px;box-sizing:border-box"></div>
<div style="position:absolute;left:280.4px;top:1117.075px;width:35px;height:35px;background:#0a78be;border-radius:50%;box-shadow:0 0 1px rgba(0,0,0,.3)"></div>
<div id="t126" style="position:absolute;left:383px;top:1107.55px;font-family:'Liberation Sans', sans-serif;font-size:25px;line-height:25px;font-weight:400;color:#1a65c9;white-space:nowrap;letter-spacing:0.176px;">Paving Stone re ad 9 July/25</div>
<div style="position:absolute;left:114px;top:1175.45px;width:823.5px;height:81.75px;background:#ffffff"></div>
<div style="position:absolute;left:135.55px;top:1195.575px;width:41.5px;height:41.5px;background:#fff;border:2px solid #ccd3da;border-radius:7px;box-sizing:border-box"></div>
<div style="position:absolute;left:249.89999999999998px;top:1197.025px;width:67px;height:38.6px;background:#fff;border:2px solid #cad2db;border-radius:19.3px;box-sizing:border-box"></div>
<div style="position:absolute;left:255.09999999999997px;top:1201.925px;width:28.8px;height:28.8px;background:#263845;border-radius:50%"></div>
<div id="t127" style="position:absolute;left:383.7px;top:1189.30px;font-family:'Liberation Sans', sans-serif;font-size:25px;line-height:25px;font-weight:400;color:#1a65c9;white-space:nowrap;letter-spacing:0.286px;">Instagram post: </div>
<div id="t128" style="position:absolute;left:569px;top:1188.45px;font-family:'Liberation Serif', serif;font-size:26px;line-height:26px;font-weight:700;color:#1a65c9;white-space:nowrap;letter-spacing:0.472px;">Your Royal Residence Await</div>
<div id="t129" style="position:absolute;left:894.5px;top:1189.30px;font-family:'Liberation Sans', sans-serif;font-size:25px;line-height:25px;font-weight:400;color:#1c2b33;white-space:nowrap;">...</div>
<div style="position:absolute;left:114px;top:1257.2px;width:823.5px;height:81.75px;background:#f5f6f8"></div>
<div style="position:absolute;left:135.55px;top:1277.325px;width:41.5px;height:41.5px;background:#fff;border:2px solid #ccd3da;border-radius:7px;box-sizing:border-box"></div>
<div style="position:absolute;left:249.89999999999998px;top:1278.775px;width:67px;height:38.6px;background:#fff;border:2px solid #cad2db;border-radius:19.3px;box-sizing:border-box"></div>
<div style="position:absolute;left:255.09999999999997px;top:1283.675px;width:28.8px;height:28.8px;background:#263845;border-radius:50%"></div>
<div id="t130" style="position:absolute;left:383px;top:1271.05px;font-family:'Liberation Sans', sans-serif;font-size:25px;line-height:25px;font-weight:400;color:#1a65c9;white-space:nowrap;letter-spacing:0.072px;">Home for sale patia 22 Dec 25</div>
<div style="position:absolute;left:114px;top:1338.95px;width:823.5px;height:81.75px;background:#ffffff"></div>
<div style="position:absolute;left:135.55px;top:1359.075px;width:41.5px;height:41.5px;background:#fff;border:2px solid #ccd3da;border-radius:7px;box-sizing:border-box"></div>
<div style="position:absolute;left:249.89999999999998px;top:1360.525px;width:67px;height:38.6px;background:#fff;border:2px solid #cad2db;border-radius:19.3px;box-sizing:border-box"></div>
<div style="position:absolute;left:255.09999999999997px;top:1365.425px;width:28.8px;height:28.8px;background:#263845;border-radius:50%"></div>
<div id="t131" style="position:absolute;left:383px;top:1352.80px;font-family:'Liberation Sans', sans-serif;font-size:25px;line-height:25px;font-weight:400;color:#1a65c9;white-space:nowrap;letter-spacing:0.109px;">Sonsy Euphonia 16th Dec 2025</div>
<div style="position:absolute;left:198.8px;top:763.5px;width:2px;height:607.5px;background:#dfe1e5"></div>
<div style="position:absolute;left:366px;top:763.5px;width:2px;height:607.5px;background:#dfe1e5"></div>
<div style="position:absolute;left:937.0px;top:763.5px;width:2px;height:607.5px;background:#d9dadd"></div>
<div style="position:absolute;left:939.0px;top:763.5px;width:8px;height:607.5px;background:linear-gradient(90deg,rgba(0,0,0,0.07),rgba(0,0,0,0))"></div>
<div style="position:absolute;left:2448.3px;top:785.4px;width:11.5px;height:38.4px;background:#c1c1c1;border-radius:6px"></div>
</div>
<div style="position:absolute;left:114px;top:677px;width:2353px;height:85.5px;background:#fff"></div>
<div style="position:absolute;left:135.55px;top:699.95px;width:41.5px;height:41.5px;background:#fff;border:2px solid #ccd3da;border-radius:7px;box-sizing:border-box"></div>
<div id="t132" style="position:absolute;left:219.3px;top:694.20px;font-family:'Liberation Sans', sans-serif;font-size:24px;line-height:24px;font-weight:700;color:#1c2b33;white-space:nowrap;letter-spacing:1.669px;">Off/On</div>
<svg style="position:absolute;left:227.3px;top:729.5px;overflow:visible;" width="26" height="20" viewBox="0 0 26 20"><path d="M6.5 19 V2 M1.5 7 L6.5 1.5 L11.5 7 M19.5 1 V18 M14.5 13 L19.5 18.5 L24.5 13" fill="none" stroke="#1c2b33" stroke-width="2.6" stroke-linecap="round" stroke-linejoin="round"/></svg>
<div id="t133" style="position:absolute;left:386.8px;top:706.60px;font-family:'Liberation Sans', sans-serif;font-size:24px;line-height:24px;font-weight:700;color:#1c2b33;white-space:nowrap;letter-spacing:-0.088px;">Campaign</div>
<svg style="position:absolute;left:512.2px;top:708.5px;overflow:visible;" width="26" height="20" viewBox="0 0 26 20"><path d="M6.5 19 V2 M1.5 7 L6.5 1.5 L11.5 7 M19.5 1 V18 M14.5 13 L19.5 18.5 L24.5 13" fill="none" stroke="#1c2b33" stroke-width="2.6" stroke-linecap="round" stroke-linejoin="round"/></svg>
<svg style="position:absolute;left:906.7px;top:717.0px;overflow:visible;" width="14" height="8" viewBox="0 0 14 8"><path d="M0 0 L14 0 L7.0 8 Z" fill="#1c2b33" stroke="#1c2b33" stroke-width="2" stroke-linejoin="round"/></svg>
<svg style="position:absolute;left:937.5px;top:708.5px;overflow:visible;" width="26" height="20" viewBox="0 0 26 20"><path d="M6.5 19 V2 M1.5 7 L6.5 1.5 L11.5 7 M19.5 1 V18 M14.5 13 L19.5 18.5 L24.5 13" fill="none" stroke="#1c2b33" stroke-width="2.6" stroke-linecap="round" stroke-linejoin="round"/></svg>
<svg style="position:absolute;left:1038.5px;top:717.0px;overflow:visible;" width="14" height="8" viewBox="0 0 14 8"><path d="M0 0 L14 0 L7.0 8 Z" fill="#1c2b33" stroke="#1c2b33" stroke-width="2" stroke-linejoin="round"/></svg>
<div id="t134" style="position:absolute;left:1087.4px;top:707.50px;font-family:'Liberation Sans', sans-serif;font-size:24px;line-height:24px;font-weight:700;color:#1c2b33;white-space:nowrap;letter-spacing:-0.512px;">Reach</div>
<svg style="position:absolute;left:1166.4px;top:708.5px;overflow:visible;" width="26" height="20" viewBox="0 0 26 20"><path d="M6.5 19 V2 M1.5 7 L6.5 1.5 L11.5 7 M19.5 1 V18 M14.5 13 L19.5 18.5 L24.5 13" fill="none" stroke="#1c2b33" stroke-width="2.6" stroke-linecap="round" stroke-linejoin="round"/></svg>
<svg style="position:absolute;left:1298.0px;top:716.5px;overflow:visible;" width="14" height="8" viewBox="0 0 14 8"><path d="M0 0 L14 0 L7.0 8 Z" fill="#1c2b33" stroke="#1c2b33" stroke-width="2" stroke-linejoin="round"/></svg>
<div id="t135" style="position:absolute;left:1346.5px;top:707.50px;font-family:'Liberation Sans', sans-serif;font-size:24px;line-height:24px;font-weight:700;color:#1c2b33;white-space:nowrap;letter-spacing:0.041px;">Frequency</div>
<svg style="position:absolute;left:1476.4px;top:708.5px;overflow:visible;" width="26" height="20" viewBox="0 0 26 20"><path d="M6.5 19 V2 M1.5 7 L6.5 1.5 L11.5 7 M19.5 1 V18 M14.5 13 L19.5 18.5 L24.5 13" fill="none" stroke="#1c2b33" stroke-width="2.6" stroke-linecap="round" stroke-linejoin="round"/></svg>
<svg style="position:absolute;left:1557.7px;top:716.5px;overflow:visible;" width="14" height="8" viewBox="0 0 14 8"><path d="M0 0 L14 0 L7.0 8 Z" fill="#1c2b33" stroke="#1c2b33" stroke-width="2" stroke-linejoin="round"/></svg>
<div id="t136" style="position:absolute;left:1605.4px;top:694.20px;font-family:'Liberation Sans', sans-serif;font-size:24px;line-height:24px;font-weight:700;color:#1c2b33;white-space:nowrap;letter-spacing:0.059px;">Cost per result</div>
<svg style="position:absolute;left:1613px;top:729.5px;overflow:visible;" width="26" height="20" viewBox="0 0 26 20"><path d="M6.5 19 V2 M1.5 7 L6.5 1.5 L11.5 7 M19.5 1 V18 M14.5 13 L19.5 18.5 L24.5 13" fill="none" stroke="#1c2b33" stroke-width="2.6" stroke-linecap="round" stroke-linejoin="round"/></svg>
<svg style="position:absolute;left:1817.2px;top:721.0px;overflow:visible;" width="14" height="8" viewBox="0 0 14 8"><path d="M0 0 L14 0 L7.0 8 Z" fill="#1c2b33" stroke="#1c2b33" stroke-width="2" stroke-linejoin="round"/></svg>
<div id="t137" style="position:absolute;left:1866px;top:707.50px;font-family:'Liberation Sans', sans-serif;font-size:24px;line-height:24px;font-weight:700;color:#1c2b33;white-space:nowrap;letter-spacing:0.429px;">Budget</div>
<svg style="position:absolute;left:1959.5px;top:708.5px;overflow:visible;" width="26" height="20" viewBox="0 0 26 20"><path d="M6.5 19 V2 M1.5 7 L6.5 1.5 L11.5 7 M19.5 1 V18 M14.5 13 L19.5 18.5 L24.5 13" fill="none" stroke="#1c2b33" stroke-width="2.6" stroke-linecap="round" stroke-linejoin="round"/></svg>
<svg style="position:absolute;left:2055.5px;top:716.5px;overflow:visible;" width="14" height="8" viewBox="0 0 14 8"><path d="M0 0 L14 0 L7.0 8 Z" fill="#1c2b33" stroke="#1c2b33" stroke-width="2" stroke-linejoin="round"/></svg>
<div id="t138" style="position:absolute;left:2104px;top:694.20px;font-family:'Liberation Sans', sans-serif;font-size:24px;line-height:24px;font-weight:700;color:#1c2b33;white-space:nowrap;letter-spacing:0.243px;">Amount spent</div>
<svg style="position:absolute;left:2111px;top:729.5px;overflow:visible;" width="26" height="20" viewBox="0 0 26 20"><path d="M6.5 19 V2 M1.5 7 L6.5 1.5 L11.5 7 M19.5 1 V18 M14.5 13 L19.5 18.5 L24.5 13" fill="none" stroke="#1c2b33" stroke-width="2.6" stroke-linecap="round" stroke-linejoin="round"/></svg>
<svg style="position:absolute;left:2315.5px;top:721.0px;overflow:visible;" width="14" height="8" viewBox="0 0 14 8"><path d="M0 0 L14 0 L7.0 8 Z" fill="#1c2b33" stroke="#1c2b33" stroke-width="2" stroke-linejoin="round"/></svg>
<div id="t139" style="position:absolute;left:2364px;top:707.10px;font-family:'Liberation Sans', sans-serif;font-size:24px;line-height:24px;font-weight:700;color:#1c2b33;white-space:nowrap;letter-spacing:-0.729px;">Ends</div>
<svg style="position:absolute;left:2429.4px;top:708.5px;overflow:visible;" width="26" height="20" viewBox="0 0 26 20"><path d="M6.5 19 V2 M1.5 7 L6.5 1.5 L11.5 7 M19.5 1 V18 M14.5 13 L19.5 18.5 L24.5 13" fill="none" stroke="#1c2b33" stroke-width="2.6" stroke-linecap="round" stroke-linejoin="round"/></svg>
<div style="position:absolute;left:198.8px;top:677px;width:2px;height:85.5px;background:#dfe1e5"></div>
<div style="position:absolute;left:366px;top:677px;width:2px;height:85.5px;background:#dfe1e5"></div>
<div style="position:absolute;left:1066.5px;top:677px;width:2px;height:85.5px;background:#dfe1e5"></div>
<div style="position:absolute;left:1326px;top:677px;width:2px;height:85.5px;background:#dfe1e5"></div>
<div style="position:absolute;left:1585.5px;top:677px;width:2px;height:85.5px;background:#dfe1e5"></div>
<div style="position:absolute;left:1845px;top:677px;width:2px;height:85.5px;background:#dfe1e5"></div>
<div style="position:absolute;left:2083px;top:677px;width:2px;height:85.5px;background:#dfe1e5"></div>
<div style="position:absolute;left:2343px;top:677px;width:2px;height:85.5px;background:#dfe1e5"></div>
<div style="position:absolute;left:937.0px;top:677px;width:2px;height:85.5px;background:#d9dadd"></div>
<div style="position:absolute;left:939.0px;top:677px;width:8px;height:85.5px;background:linear-gradient(90deg,rgba(0,0,0,0.05),rgba(0,0,0,0))"></div>
<div style="position:absolute;left:114px;top:762px;width:2353px;height:1.5px;background:#c9c9c9"></div>
<div style="position:absolute;left:114px;top:763.5px;width:2353px;height:7px;background:linear-gradient(180deg,rgba(0,0,0,0.08),rgba(0,0,0,0))"></div>
<div style="position:absolute;left:114px;top:1371px;width:2353px;height:132px;background:#fff"></div>
<div style="position:absolute;left:114px;top:1364px;width:2353px;height:7px;background:linear-gradient(0deg,rgba(0,0,0,0.07),rgba(0,0,0,0))"></div>
<div style="position:absolute;left:114px;top:1370px;width:2353px;height:1.5px;background:#dedede"></div>
<div id="t140" style="position:absolute;right:1504.6px;top:1388.55px;font-family:'Liberation Sans', sans-serif;font-size:25px;line-height:25px;font-weight:400;color:#1c2b33;white-space:nowrap;letter-spacing:0.4px;">—</div>
<div id="t141" style="position:absolute;right:1504.7px;top:1424.65px;font-family:'Liberation Sans', sans-serif;font-size:21px;line-height:21px;font-weight:400;color:#67737d;white-space:nowrap;letter-spacing:0.3px;">conversions</div>
<div id="t142" style="position:absolute;right:1245.2px;top:1388.55px;font-family:'Liberation Sans', sans-serif;font-size:25px;line-height:25px;font-weight:400;color:#1c2b33;white-space:nowrap;border-bottom:2px dotted #1c2b33;line-height:27px;height:25px">5,551,525</div>
<div id="t143" style="position:absolute;right:1244.9px;top:1424.65px;font-family:'Liberation Sans', sans-serif;font-size:21px;line-height:21px;font-weight:400;color:#67737d;white-space:nowrap;letter-spacing:0.3px;">Accounts Centre acco...</div>
<div id="t144" style="position:absolute;right:985.8999999999999px;top:1388.55px;font-family:'Liberation Sans', sans-serif;font-size:25px;line-height:25px;font-weight:400;color:#1c2b33;white-space:nowrap;letter-spacing:0.4px;">1.57</div>
<div id="t145" style="position:absolute;right:992.7px;top:1424.65px;font-family:'Liberation Sans', sans-serif;font-size:21px;line-height:21px;font-weight:400;color:#67737d;white-space:nowrap;letter-spacing:0.3px;">Per Accounts Centre ...</div>
<div id="t146" style="position:absolute;right:725.5999999999999px;top:1388.55px;font-family:'Liberation Sans', sans-serif;font-size:25px;line-height:25px;font-weight:400;color:#1c2b33;white-space:nowrap;letter-spacing:0.4px;">—</div>
<div id="t147" style="position:absolute;right:725.7px;top:1424.65px;font-family:'Liberation Sans', sans-serif;font-size:21px;line-height:21px;font-weight:400;color:#67737d;white-space:nowrap;letter-spacing:0.3px;">Multiple conversions</div>
<div id="t148" style="position:absolute;right:228.4000000000001px;top:1388.55px;font-family:'Liberation Sans', sans-serif;font-size:25px;line-height:25px;font-weight:400;color:#1c2b33;white-space:nowrap;letter-spacing:0.4px;">₹257,002.87</div>
<div id="t149" style="position:absolute;right:228.5px;top:1424.65px;font-family:'Liberation Sans', sans-serif;font-size:21px;line-height:21px;font-weight:400;color:#67737d;white-space:nowrap;letter-spacing:0.3px;">Total Spent</div>
<div style="position:absolute;left:1066.5px;top:1371px;width:2px;height:132px;background:#dfe1e5"></div>
<div style="position:absolute;left:1326px;top:1371px;width:2px;height:132px;background:#dfe1e5"></div>
<div style="position:absolute;left:1585.5px;top:1371px;width:2px;height:132px;background:#dfe1e5"></div>
<div style="position:absolute;left:1845px;top:1371px;width:2px;height:132px;background:#dfe1e5"></div>
<div style="position:absolute;left:2083px;top:1371px;width:2px;height:132px;background:#dfe1e5"></div>
<div style="position:absolute;left:2343px;top:1371px;width:2px;height:132px;background:#dfe1e5"></div>
<div style="position:absolute;left:114px;top:1371.5px;width:823.5px;height:131.5px;background:#fff"></div>
<div id="t150" style="position:absolute;left:390.7px;top:1388.75px;font-family:'Liberation Sans', sans-serif;font-size:25px;line-height:25px;font-weight:400;color:#1c2b33;white-space:nowrap;letter-spacing:0.025px;">Results from 118 campaigns</div>
<div style="position:absolute;left:715px;top:1391.5px;width:21px;height:21px;background:#1c2b33;border-radius:50%"></div>
<div id="t151" style="position:absolute;left:725.5px;top:1395.40px;font-family:'Liberation Sans', sans-serif;font-size:16px;line-height:16px;font-weight:700;color:#fff;white-space:nowrap;transform:translateX(-50%)">i</div>
<div style="position:absolute;left:366px;top:1371px;width:2px;height:132px;background:#dfe1e5"></div>
<div style="position:absolute;left:937.0px;top:1371px;width:2px;height:132px;background:#d9dadd"></div>
<div style="position:absolute;left:939.0px;top:1371px;width:8px;height:132px;background:linear-gradient(90deg,rgba(0,0,0,0.06),rgba(0,0,0,0))"></div>
<div style="position:absolute;left:114px;top:1503px;width:2353px;height:1.5px;background:#dedede"></div>
<div style="position:absolute;left:488.7px;top:1510.5px;width:867.7px;height:12.5px;background:#c1c1c1;border-radius:7px"></div>
</body></html>
